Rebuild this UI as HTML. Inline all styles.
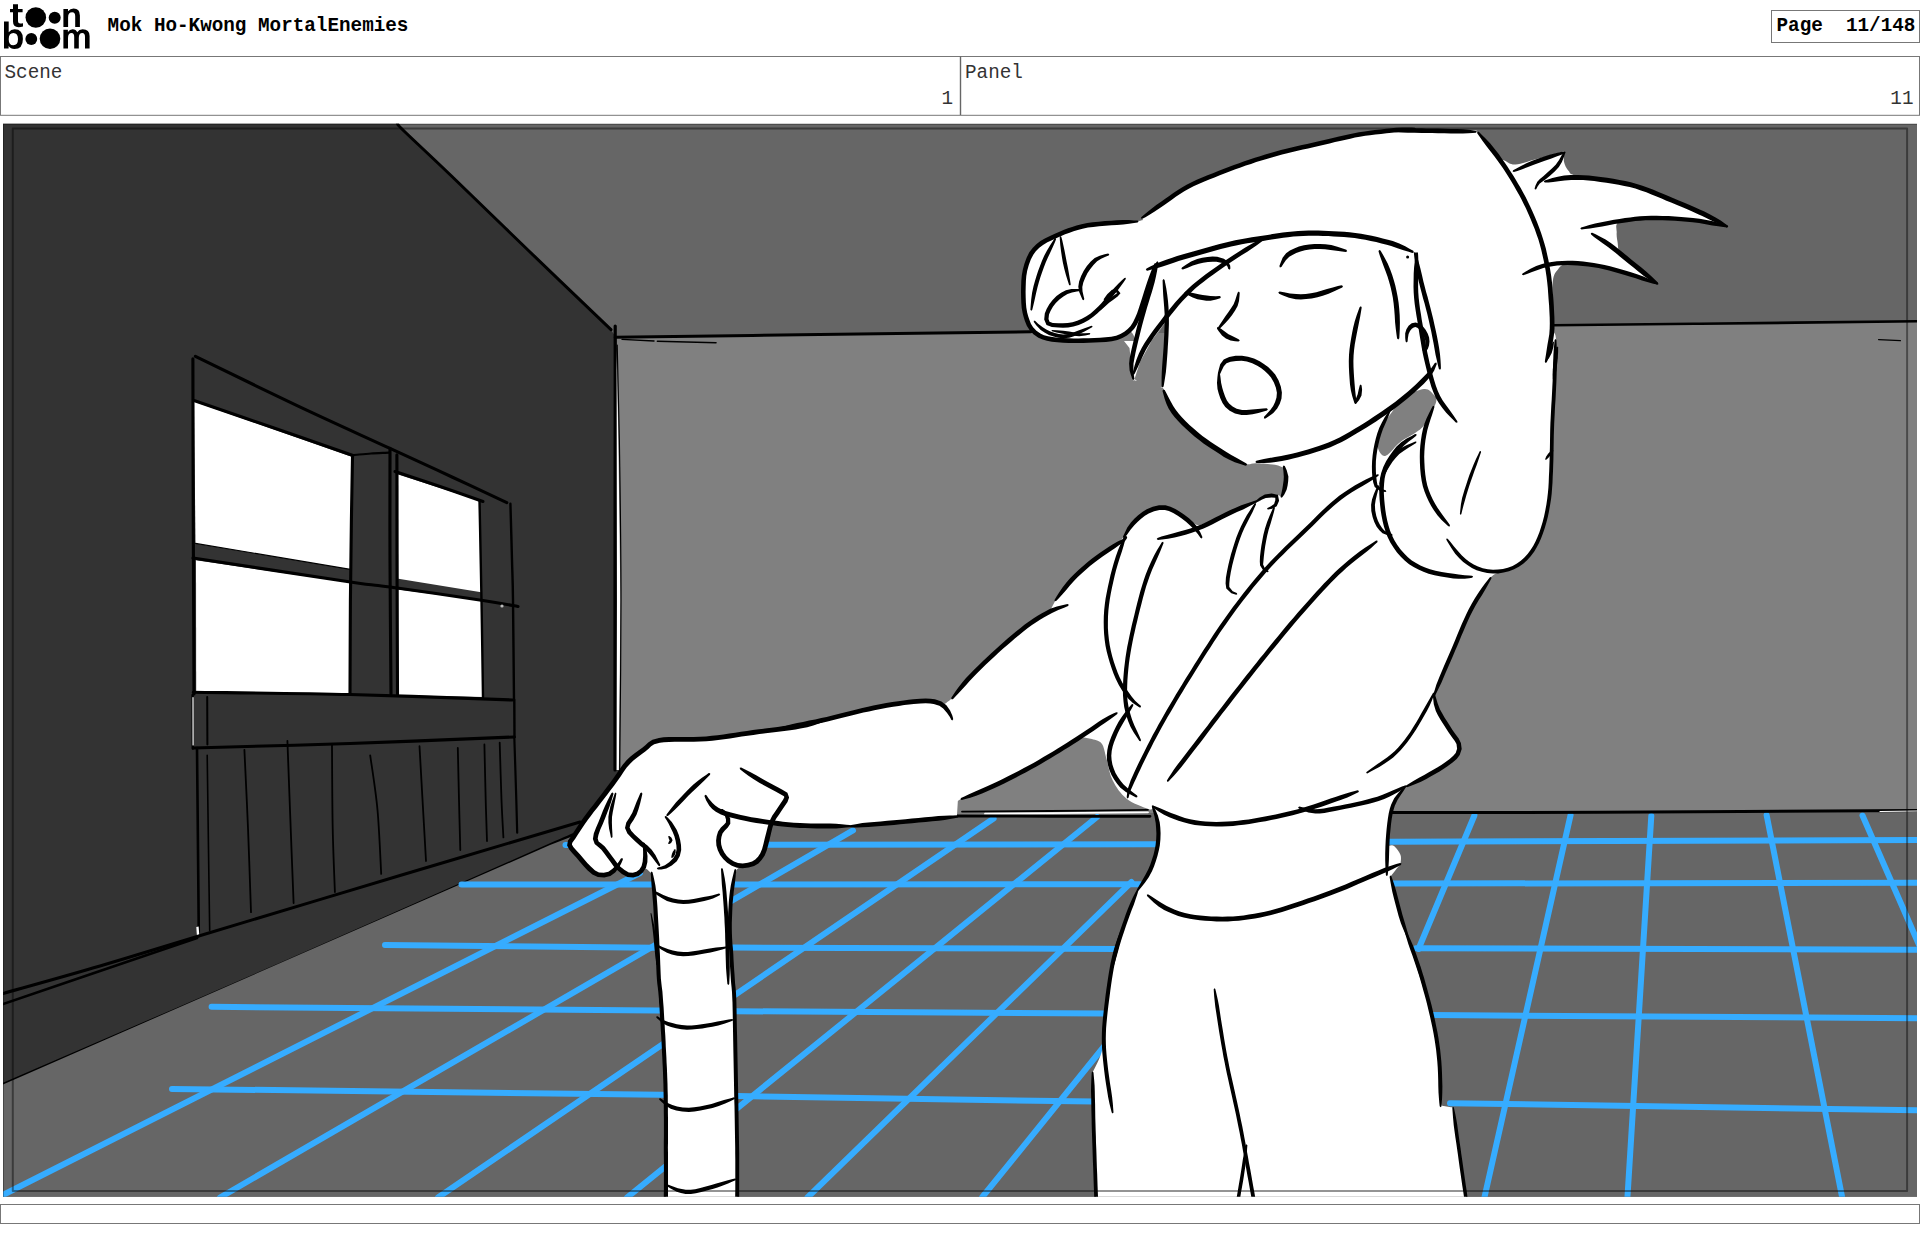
<!DOCTYPE html>
<html lang="en">
<head>
<meta charset="utf-8">
<title>Storyboard - Page 11/148</title>
<style>
html,body{margin:0;padding:0;background:#fff;}
body{width:1920px;height:1242px;overflow:hidden;position:relative;font-family:"Liberation Mono",monospace;}
svg{position:absolute;left:0;top:0;display:block;}
text{font-family:"Liberation Mono",monospace;font-size:19.3px;fill:#000;}
.b{font-weight:bold;}
.g{fill:#333;}
</style>
</head>
<body>
<svg width="1920" height="1242" viewBox="0 0 1920 1242">
<!-- header -->
<g id="logo" fill="#000">
  <!-- t -->
  <path d="M13 4.2H18V9H22.6V12.3H18V21.2Q18 23.6 20.2 23.6Q21.6 23.6 23 23.2V26.6Q21 27.3 18.6 27.3Q13 27.3 13 21.6V12.3H10V9H13Z"/>
  <circle cx="35.8" cy="17.5" r="10.3"/>
  <circle cx="54.7" cy="17.7" r="6"/>
  <!-- n -->
  <path d="M63.4 9H68V11.2Q70.2 8.4 73.6 8.4Q79.9 8.4 79.9 15.4V27H75.2V16.2Q75.2 12.3 72.2 12.3Q68.1 12.3 68.1 17.4V27H63.4Z"/>
  <!-- b -->
  <path d="M4 21.4H8.7V32.2Q10.9 29.3 14.6 29.3Q22.9 29.3 22.9 39Q22.9 49 14.4 49Q10.6 49 8.6 46.1V48.5H4ZM8.7 39.2Q8.7 45.3 13.3 45.3Q18 45.3 18 39.1Q18 33 13.4 33Q8.7 33 8.7 39.2Z" fill-rule="evenodd"/>
  <circle cx="31.3" cy="39" r="5.9"/>
  <circle cx="50" cy="38.8" r="10.3"/>
  <!-- m -->
  <path d="M63.4 29.8H67.9V32Q69.7 29.2 72.6 29.2Q76 29.2 77.2 32.2Q79.2 29.2 82.6 29.2Q89.6 29.2 89.6 36V48.6H85V37Q85 33.1 82.3 33.1Q78.8 33.1 78.8 38V48.6H74.2V37Q74.2 33.1 71.6 33.1Q68 33.1 68 38.2V48.6H63.4Z"/>
</g>
<text class="b" x="107.6" y="31">Mok Ho-Kwong MortalEnemies</text>
<rect x="1771.5" y="10.5" width="148" height="32" fill="#fff" stroke="#777" stroke-width="1"/>
<text class="b" x="1776.5" y="31" xml:space="preserve">Page  11/148</text>
<rect x="0.5" y="56.5" width="1919" height="58.8" fill="#fff" stroke="#777" stroke-width="1"/>
<path d="M960.5 56.5V115" stroke="#666" stroke-width="1.4" fill="none"/>
<text class="g" x="4.5" y="78">Scene</text>
<text class="g" x="953" y="103.5" text-anchor="end">1</text>
<text class="g" x="965" y="78">Panel</text>
<text class="g" x="1913.5" y="103.5" text-anchor="end">11</text>
<rect x="0.5" y="1204.5" width="1919" height="19" fill="#fff" stroke="#777" stroke-width="1"/>
<!-- drawing -->
<g stroke-linecap="round" stroke-linejoin="round">
<defs><clipPath id="cp"><rect x="3" y="123.8" width="1914" height="1072.9"/></clipPath></defs>
<g clip-path="url(#cp)">
<rect x="0" y="120" width="1920" height="1080" fill="#666666"/>
<path d="M614 337.5 L800 335 L1031 332 L1553 325.4 L1780 323 L1920 321.3 L1920 811 L1394 812.5 L1150 813 L616 822Z" fill="#808080"/>
<path d="M0 120 L397.5 120 L400 126 L452 176.5 L611 330 L616.5 338 L619.5 740 L619 826 L572 836.4 L550 845 L3 1084.5 L0 1086Z" fill="#333333"/>
<path d="M194 401.5 L353 457.2 L351 569.4 L195.5 543.5Z" fill="#ffffff"/>
<path d="M196 560.3 L350.5 582.5 L350.2 694 L196.2 692.6Z" fill="#ffffff"/>
<path d="M398.2 474.5 L479 500.6 L481.2 592.3 L398.4 578.8Z" fill="#ffffff"/>
<path d="M398.3 589.6 L481 600.3 L483.3 697 L398.3 695.2Z" fill="#ffffff"/>
<path d="M192.9 358.8C192.9 382.3 193 453.1 193.2 500C193.3 546.9 193.7 607.7 193.8 640C193.9 672.3 194 685 194 694" fill="none" stroke="#000" stroke-width="3.1"/>
<path d="M195.4 356.3C212 364.4 262.6 389.2 295 404.6C327.4 420 363.8 436.3 390 448.4C416.2 460.5 432.5 467.9 452 477C471.5 486.1 497.7 498.4 506.8 502.7" fill="none" stroke="#000" stroke-width="3.1"/>
<path d="M510.4 503.7C510.7 513.1 511.6 544 512 560C512.4 576 512.7 576.7 513 600C513.3 623.3 513.8 683.3 514 700" fill="none" stroke="#000" stroke-width="2.4"/>
<path d="M194 400.5C207.3 405.1 247.5 418.8 274 428C300.5 437.2 339.8 450.9 353 455.5" fill="none" stroke="#000" stroke-width="3.1"/>
<path d="M352.5 457C352.3 467.5 351.8 496.2 351.4 520C351 543.8 350.6 571 350.4 600C350.2 629 350.1 678.3 350 694" fill="none" stroke="#000" stroke-width="3.1"/>
<path d="M353 455C356 454.8 365 453.9 371 453.5C377 453.1 386 452.8 389 452.6" fill="none" stroke="#000" stroke-width="2.2"/>
<path d="M390 448.4C390 467 389.8 519.1 390 560C390.2 600.9 390.8 671.7 391 694" fill="none" stroke="#000" stroke-width="3.1"/>
<path d="M396.9 454.7C396.9 472.2 396.9 520 397 560C397.1 600 397.4 672.5 397.5 695" fill="none" stroke="#000" stroke-width="3.1"/>
<path d="M395 471.5C402.5 474 425.3 481.5 440 486.5C454.7 491.5 475.8 499 483 501.5" fill="none" stroke="#000" stroke-width="3.1"/>
<path d="M479.5 500.6C479.7 508.8 480.2 533.4 480.5 550C480.8 566.6 481.1 575.5 481.5 600C481.9 624.5 482.8 680.8 483 697" fill="none" stroke="#000" stroke-width="2.4"/>
<path d="M193 558C219.2 562 317.6 577.2 350.4 582C383.2 586.8 367.9 583.9 390 587C412.1 590.1 461.7 597.2 483 600.5C504.3 603.8 512.2 605.5 518 606.5" fill="none" stroke="#000" stroke-width="3.1"/>
<path d="M195.5 543.3 L350.4 569.4" fill="none" stroke="#000" stroke-width="1.2"/>
<path d="M193.3 692.2C219.4 692.6 296.8 693.2 350 694.5C403.2 695.8 485.4 699.1 512.5 700" fill="none" stroke="#000" stroke-width="3.1"/>
<circle cx="502" cy="606" r="1.6" fill="#bbb"/>
<path d="M192.6 695 L192.8 748.5" fill="none" stroke="#000" stroke-width="2.4"/>
<path d="M193 697.5 L193.1 745" fill="none" stroke="#fff" stroke-width="1.2"/>
<path d="M207.2 697 L207.4 744.4" fill="none" stroke="#000" stroke-width="2"/>
<path d="M193.3 748C219.4 747.2 296.5 745.3 350 743.5C403.5 741.7 486.9 738.1 514.3 737" fill="none" stroke="#000" stroke-width="3.1"/>
<path d="M514.3 700 L514.5 737" fill="none" stroke="#000" stroke-width="2.4"/>
<path d="M197 748C197.2 765 197.7 818.7 198 850C198.3 881.3 198.7 921.7 198.8 936" fill="none" stroke="#000" stroke-width="2.6"/>
<path d="M207.2 755.3C207.4 771.1 208.1 820.8 208.5 850C208.9 879.2 209.5 917 209.7 930.4" fill="none" stroke="#000" stroke-width="1.6"/>
<path d="M244.4 749.9C245 763 246.9 801.2 248 828.3C249.1 855.3 250.5 898.2 251 912.2" fill="none" stroke="#000" stroke-width="1.8"/>
<path d="M287.4 740.8C287.8 752.3 289 783 290 810C291 837 293 887.5 293.6 903" fill="none" stroke="#000" stroke-width="1.8"/>
<path d="M332 745C332.1 758.8 332.2 803.5 332.7 828C333.2 852.5 334.5 881.3 334.9 892" fill="none" stroke="#000" stroke-width="1.8"/>
<path d="M370.2 755.3C371.4 764.4 375.7 790.2 377.5 810C379.3 829.8 380.6 863.2 381.2 873.9" fill="none" stroke="#000" stroke-width="1.8"/>
<path d="M419.5 746.2C420.1 756.8 422 790.9 423.1 810C424.2 829.1 425.5 852.5 426 861" fill="none" stroke="#000" stroke-width="1.8"/>
<path d="M457.8 748C458 756.7 458.6 783 459 800C459.4 817 460.1 841.7 460.3 850" fill="none" stroke="#000" stroke-width="1.8"/>
<path d="M484.4 744.4C484.6 753.7 485.3 783.9 485.7 800C486.1 816.1 486.8 834.2 487 841" fill="none" stroke="#000" stroke-width="1.8"/>
<path d="M499.7 742.6C500 752.2 500.9 784.2 501.5 800C502.1 815.8 503.1 831.2 503.4 837.4" fill="none" stroke="#000" stroke-width="1.8"/>
<path d="M514.3 737C514.6 745.8 515.5 774 516 790C516.5 806 517 825.6 517.2 832.7" fill="none" stroke="#000" stroke-width="2.2"/>
<path d="M196.3 927 L198.6 926.5 L199.4 936 L197 937Z" fill="#fff"/>
<path d="M397.5 123.5C398.6 124.8 394.9 122.2 404 131C413.1 139.8 431 156.3 452 176.5C473 196.7 503.5 226.5 530 252C556.5 277.5 597.5 316.8 611 329.7" fill="none" stroke="#000" stroke-width="3"/>
<path d="M615.2 326C615.2 341.7 615.2 374.3 615.2 420C615.2 465.7 615 541.7 615 600C615 658.3 615 741.7 615 770" fill="none" stroke="#000" stroke-width="3.2"/>
<path d="M616.6 350 L617 600 L616.6 770 L618.9 770 L620.4 600 L618.2 430Z" fill="#fff"/>
<path d="M617.2 345C617.6 362.5 618.9 407.5 619.5 450C620.1 492.5 621 546.7 621 600C621 653.3 619.9 741.7 619.7 770" fill="none" stroke="#000" stroke-width="1.2"/>
<path d="M615.2 337.2C646 336.8 730.7 335.7 800 334.8C869.3 333.9 992.5 332.3 1031 331.8" fill="none" stroke="#000" stroke-width="3"/>
<path d="M622 339.4 L654 341" fill="none" stroke="#000" stroke-width="1.4"/>
<path d="M657.4 341.2 L716 342.7" fill="none" stroke="#000" stroke-width="1.6"/>
<path d="M1552.9 325.2C1577.4 324.9 1639.3 324.3 1700 323.7C1760.7 323.1 1880.8 321.7 1917 321.3" fill="none" stroke="#000" stroke-width="2.6"/>
<path d="M1878.6 339.6 L1900.4 340.6" fill="none" stroke="#000" stroke-width="1.3"/>
<path d="M3 993.5C19.2 988.9 67.4 975.6 100 966C132.6 956.4 148.8 951.1 198.8 936C248.8 920.9 336.5 894.5 400 875.5C463.5 856.5 550 830.9 580 822" fill="none" stroke="#000" stroke-width="3"/>
<path d="M3 1004C19.2 998.5 67.7 982 100 971C132.3 960 180.8 943.5 197 938" fill="none" stroke="#000" stroke-width="2.6"/>
<path d="M3 1084.5C49.2 1064.5 188.8 1004.4 280 964.5C371.2 924.6 501.3 866.4 550 845C598.7 823.6 568.3 837.8 572 836.4" fill="none" stroke="#000" stroke-width="3.2"/>
<path d="M619 826 L760 822 L955 817 L1150 816.5 L1394 813 L1920 811.5 L1920 1200 L0 1200 L0 1086 L3 1084.5 L550 845 L572 836.4Z" fill="#666666"/>
<path d="M565.5 845 L1156 844.3" fill="none" stroke="#36acff" stroke-width="6"/>
<path d="M461.5 884.6 L1140 884.3" fill="none" stroke="#36acff" stroke-width="6"/>
<path d="M385 945 L654 947.7 L733.6 947.6 L1116 948.9" fill="none" stroke="#36acff" stroke-width="6"/>
<path d="M211.6 1006.8 L657 1010.4 L735 1011.2 L1105 1013.5" fill="none" stroke="#36acff" stroke-width="6"/>
<path d="M172 1088.9 L661 1094.7 L737 1096 L1094 1101.6" fill="none" stroke="#36acff" stroke-width="6"/>
<path d="M-2 1197.5 L640 873" fill="none" stroke="#36acff" stroke-width="6"/>
<path d="M220 1197.5 L853 830.4" fill="none" stroke="#36acff" stroke-width="6"/>
<path d="M438 1197.5 L993.6 818.5" fill="none" stroke="#36acff" stroke-width="6"/>
<path d="M627 1197.5 L1097 817" fill="none" stroke="#36acff" stroke-width="6"/>
<path d="M807.5 1197.5 L1131.5 882" fill="none" stroke="#36acff" stroke-width="6"/>
<path d="M982 1197.5 L1106 1044" fill="none" stroke="#36acff" stroke-width="6"/>
<path d="M1390 841.7 L1920 840" fill="none" stroke="#36acff" stroke-width="6"/>
<path d="M1393 883.6 L1920 882.7" fill="none" stroke="#36acff" stroke-width="6"/>
<path d="M1416 948.2 L1920 949.8" fill="none" stroke="#36acff" stroke-width="6"/>
<path d="M1430 1015 L1920 1018.3" fill="none" stroke="#36acff" stroke-width="6"/>
<path d="M1450 1103.2 L1920 1110.3" fill="none" stroke="#36acff" stroke-width="6"/>
<path d="M1474.4 815.5 L1418.5 949" fill="none" stroke="#36acff" stroke-width="6"/>
<path d="M1570.6 815 L1484.3 1198" fill="none" stroke="#36acff" stroke-width="6"/>
<path d="M1651.3 816 L1627.4 1198" fill="none" stroke="#36acff" stroke-width="6"/>
<path d="M1766.6 815 L1842.3 1198" fill="none" stroke="#36acff" stroke-width="6"/>
<path d="M1862.5 815.5 L1920 947" fill="none" stroke="#36acff" stroke-width="6"/>
<path d="M1392 812.6C1426.7 812.5 1512.5 812.7 1600 812.3C1687.5 811.9 1864.2 810.7 1917 810.4" fill="none" stroke="#000" stroke-width="3"/>
<path d="M1880 811.5 L1917 811" fill="none" stroke="#fff" stroke-width="1.2"/>
<path d="M962 811.6C976.7 811.5 1019 811.3 1050 811C1081 810.7 1131.7 810 1148 809.8" fill="none" stroke="#000" stroke-width="1.8"/>
<path d="M985 813.7 L1148 812.3" fill="none" stroke="#fff" stroke-width="1.8"/>
<path d="M955 816C970.8 816 1017.5 816.2 1050 816.3C1082.5 816.3 1133.3 816.3 1150 816.3" fill="none" stroke="#000" stroke-width="2.8"/>
<path d="M1024 293C1024 288.1 1023.1 284.6 1024.3 278C1025.5 271.4 1026 260.6 1031.3 253.5C1036.6 246.4 1046.9 240.4 1056.3 235.7C1065.7 231 1074 227.7 1087.6 225.3C1101.1 222.9 1128.6 222.4 1137.6 221.2C1146.6 220 1141.1 218.5 1141.8 218C1149.5 212.8 1169.7 196.1 1187.7 186.7C1205.7 177.3 1229.2 168.6 1250 161.7C1270.8 154.8 1293.6 149.7 1312.8 145C1332 140.3 1351.1 136.1 1365 133.6C1378.9 131.1 1383.5 130.6 1396 130C1408.5 129.4 1426.7 129.8 1440 129.8C1453.3 129.8 1470 130.1 1476 130.2C1476.3 130.6 1474.5 128.3 1478 132.5C1481.5 136.7 1492.3 150.8 1496.8 155.5C1501.3 160.2 1501.9 159.2 1505 160.7C1508.1 162.2 1510 164.8 1515.6 164.4C1521.2 164.1 1530.3 160.8 1538.5 158.6C1546.7 156.4 1560.2 152.5 1564.6 151.3C1564.5 153 1563.3 158.4 1564 161.7C1564.7 165 1566.4 168.6 1568.7 171C1571 173.4 1567.7 173.7 1578 176C1588.3 178.3 1614.6 180.6 1630.3 184.7C1646 188.8 1659.8 195.5 1672 200.3C1684.2 205.2 1694 209.4 1703.3 213.8C1712.6 218.2 1723.5 224.5 1727.6 226.6C1721.8 225.6 1705.6 221.9 1692.8 220.5C1680 219.1 1663.2 217.8 1651 218C1638.8 218.2 1625.5 219.2 1619.8 221.6C1614.1 224 1617 229 1616.7 232.6C1616.4 236.2 1617.2 239.5 1617.7 243C1618.2 246.5 1617.7 250.4 1619.8 253.5C1621.9 256.6 1624 256.7 1630.3 261.8C1636.6 266.9 1653 280.3 1657.6 284C1653 282.4 1640.1 277.6 1630.3 274.7C1620.5 271.8 1609.4 268.3 1599 266.4C1588.6 264.5 1574.7 262.9 1567.7 263.5C1560.8 264.1 1559.8 267.4 1557.3 270.2C1554.8 272.9 1553.8 275 1553 280C1552.2 285 1552.5 291.9 1552.5 300C1552.5 308.1 1552.4 321.8 1553 328.5C1553.6 335.2 1555.8 331.1 1556 340C1556.2 348.9 1555 367.8 1554.4 381.7C1553.8 395.6 1552.8 409.5 1552.3 423.4C1551.8 437.3 1551.8 452.5 1551.3 465C1550.8 477.5 1550.6 488.1 1549.2 498.5C1547.8 508.9 1545.7 519 1542.9 527.7C1540.1 536.5 1536.7 544.6 1532.5 551C1528.3 557.4 1523.2 562.4 1517.5 566C1511.8 569.6 1502.5 570.7 1498.1 572.5C1493.7 574.3 1492.2 576.2 1491 577C1487.5 582.5 1476.4 597.8 1470 610C1463.6 622.2 1457.9 637.5 1452.5 650C1447.1 662.5 1440.6 677.8 1437.5 685C1434.4 692.2 1434.3 692.1 1433.7 693.5C1434.4 696.3 1435.1 704 1437.9 710.2C1440.7 716.5 1446.9 725.5 1450.4 731C1453.9 736.5 1457.7 739.7 1459 743.5C1460.3 747.3 1460.1 750.5 1458 754C1455.9 757.5 1451.7 760.9 1446.2 764.8C1440.8 768.7 1431.9 773.6 1425.3 777.2C1418.7 780.8 1409.7 785 1406.6 786.6C1404.3 789.7 1396.1 796.9 1393 805C1389.9 813.1 1388.9 828.3 1388 835C1387.1 841.7 1386.5 843.2 1387.5 845C1388.5 846.8 1391.8 844.3 1394 846C1396.2 847.7 1399.4 852 1400.5 855C1401.6 858 1400.5 862.5 1400.5 864C1398.8 866.1 1392.2 874.4 1390.5 876.5C1392.2 883 1396.8 902.2 1400.5 915.3C1404.2 928.4 1408.8 941.9 1413 955.3C1417.2 968.6 1422.2 984.4 1425.6 995.4C1428.9 1006.4 1430.8 1010.1 1433.1 1021.1C1435.4 1032.1 1438.2 1048 1439.4 1061.2C1440.7 1074.4 1440 1092.5 1440.6 1100C1441.2 1107.5 1442.6 1105 1443 1106C1444.7 1106.2 1451.4 1107.2 1453.1 1107.5C1453.9 1113.5 1455.9 1128.4 1458.1 1143.8C1460.3 1159.2 1465.1 1190.6 1466.5 1200C1404.8 1200 1158 1200 1096.3 1200C1095.9 1188.5 1094.4 1152.5 1093.8 1131.3C1093.2 1110 1092.8 1082.3 1092.6 1072.5C1094.3 1068.5 1100.4 1058.2 1102.6 1048.7C1104.8 1039.2 1104.3 1027.2 1105.6 1015.4C1106.8 1003.6 1108.1 989.6 1110.1 977.9C1112.1 966.2 1114.7 955.7 1117.6 945.3C1120.5 934.9 1124.3 924.5 1127.6 915.3C1130.9 906.1 1133.8 897.7 1137.6 890.2C1141.4 882.7 1146.8 877.7 1150.2 870.2C1153.6 862.7 1156.5 853.1 1157.7 845.2C1159 837.3 1158.5 828.8 1157.7 822.6C1156.9 816.4 1153.5 810.4 1152.7 808C1152 808.2 1152.8 810.5 1148.4 809C1144.1 807.5 1132.6 803.6 1126.6 798.8C1120.6 794 1115.9 786.8 1112.5 780C1109.1 773.2 1108.1 764.1 1106.3 758C1104.5 751.9 1104.2 746.7 1101.6 743.5C1099 740.3 1093.9 739.8 1090.6 738.8C1087.3 737.8 1083.4 737.7 1082 737.5C1080.3 738.3 1080.6 737.3 1072 742.3C1063.4 747.3 1044.2 759.6 1030.3 767.3C1016.4 774.9 1000 782.9 988.5 788.2C977 793.5 966.5 796.8 961.4 799C956.3 801.2 958.4 801.1 957.8 801.5C957.7 803.8 957.1 813.2 957 815.5C947.5 816.5 917.9 819.7 900 821.5C882.1 823.3 866.4 825.6 849.7 826.3C833 827 813.1 826 800 825.5C786.9 825 775.8 823.4 771 823C770.4 825.6 768.6 833.6 767.2 838.8C765.8 844 764.9 850.2 762.5 854.4C760.1 858.6 756.6 861.8 753 863.8C749.4 865.8 743.8 865.5 741 866.5C738.2 867.5 737.2 869.4 736.5 870C735.7 873.6 732.8 884.6 731.8 891.7C730.8 898.8 730.5 905.6 730.2 912.5C729.9 919.4 729.8 926.3 730 933.3C730.2 940.2 730.6 943.3 731.3 954.2C732 965.1 733.6 983.1 734.3 998.6C735 1014.1 734.9 1027.9 735.3 1047C735.7 1066.1 736.6 1087.5 736.9 1113C737.2 1138.5 737.2 1185.5 737.2 1200C725.3 1200 677.8 1200 665.9 1200C665.9 1183.3 666.1 1125.5 665.7 1100C665.4 1074.5 664.6 1063.9 663.8 1047C663 1030.1 661.9 1014.1 660.9 998.6C659.9 983.1 658.6 966.8 657.8 954.2C657 941.6 656.9 933.3 656.3 922.9C655.7 912.5 655 899.9 654.2 891.7C653.4 883.6 652 877 651.6 874C650.5 873.1 647.4 868.4 645 868.5C642.6 868.6 640.3 873.4 637.5 874.5C634.7 875.6 631.1 876 628 875.2C624.9 874.4 621.9 869.6 618.8 869.5C615.7 869.4 612.8 873.5 609.4 874.5C606 875.5 601.8 876.1 598.4 875.2C595 874.3 592.4 872 589 868.9C585.6 865.8 581.3 860.4 578 856.5C574.7 852.6 570.5 847.3 569 845.5C569.7 844.1 570.6 841.7 573.4 837.2C576.2 832.7 581.3 824.9 586 818.4C590.7 811.9 596.7 804.5 601.6 798C606.5 791.5 611.2 785.4 615.6 779.4C620 773.4 623.3 767.2 628 762.2C632.7 757.2 638.6 753.4 643.8 749.7C649 746.1 649 742.1 659.4 740.3C669.8 738.5 690.7 740.1 706.3 738.8C721.9 737.5 740.7 734.2 753 732.5C765.3 730.8 768.5 730.7 780 728.7C791.5 726.7 806.1 723.9 821.7 720.4C837.3 716.9 858.5 711 873.8 707.9C889.1 704.8 903.4 702.6 913.5 701.6C923.6 700.6 929.1 701.2 934.3 701.6C939.5 702 943 703.6 944.8 704C946 703.1 950.8 699.4 952 698.5C954.6 695.4 961.6 686.3 967.7 679.7C973.8 673.1 981.5 665.5 988.5 658.9C995.5 652.3 1002.4 645.9 1009.4 640C1016.4 634.1 1023.5 628.2 1030.3 623.4C1037.1 618.6 1046.7 613.2 1050 611.2C1050.9 609.4 1054.4 602.3 1055.3 600.5C1058.1 597 1065.8 586.2 1072 579.6C1078.2 573 1085.8 566.5 1092.8 560.9C1099.8 555.3 1108.5 550.3 1113.7 546.3C1118.9 542.3 1120.7 540.8 1123.8 537C1126.9 533.2 1128.5 528.1 1132.5 523.8C1136.5 519.5 1142.1 514 1147.5 511.3C1152.9 508.6 1159.6 507.1 1165 507.5C1170.4 507.9 1175 511 1180 513.8C1185 516.5 1192.5 522.3 1195 524C1196.2 524 1196 526.2 1202.5 524.2C1209 522.2 1224.4 515.5 1233.8 511.7C1243.2 507.9 1253.6 504.2 1258.8 501.6C1264 499 1262.4 497.2 1265 496C1267.6 494.8 1271.7 494.5 1274.4 494.5C1277.1 494.5 1279.9 495.8 1281 496C1281.6 494.8 1283.7 492.2 1284.5 489C1285.3 485.8 1286.1 480.1 1286 476.6C1285.9 473.1 1284.2 469.4 1283.8 468C1282.3 467.5 1279.7 465.6 1275 464.8C1270.3 464 1260.4 463.3 1255.6 463.2C1250.8 463.1 1250.5 464.9 1246.3 464C1242.1 463.1 1235.1 460.2 1230.2 457.8C1225.3 455.4 1221 452.2 1216.8 449.5C1212.6 446.8 1209.3 444.8 1205.1 441.7C1200.9 438.6 1196 434.7 1191.8 431C1187.6 427.3 1183.5 424.2 1180 419.6C1176.5 415 1173.8 408.5 1171 403.2C1168.2 397.9 1164.3 390.5 1163 388C1158.1 386.7 1138.3 381.3 1133.4 380C1133.1 377.2 1130.9 370.2 1131.3 363.5C1131.7 356.8 1135.2 343.9 1136 340C1134.9 338.5 1132.5 331.3 1129.3 331C1126.1 330.7 1124.4 336.6 1116.8 338.3C1109.2 340 1095.2 341 1083.4 341C1071.6 341 1054.6 340.3 1045.9 338.3C1037.2 336.3 1035 334.1 1031.3 329C1027.6 323.9 1025.2 313.7 1024 307.7C1022.8 301.7 1024 297.9 1024 293Z" fill="#ffffff"/>
<path d="M1124 341 L1129.5 348 L1131 362 L1131.5 376 L1134 381 L1137 341Z" fill="#ffffff"/>
<path d="M1167 320 L1152 340 L1140 362 L1134.5 379 L1150 392 L1162.6 387 L1165.7 346.8Z" fill="#808080"/>
<path d="M1167 320 L1158.5 333 L1166.3 333Z" fill="#666666"/>
<path d="M1404.3 397.4C1410 393 1419.2 389.5 1424.1 389C1429 388.5 1431.5 392.3 1433.5 394.6C1435.5 396.9 1437.4 397.8 1436 402.6C1434.6 407.4 1428.3 418.5 1425.1 423.4C1421.9 428.3 1421 428.7 1416.8 431.8C1412.6 434.9 1405 438.4 1400.1 442.2C1395.2 446 1390.7 452.7 1387.6 454.7C1384.5 456.7 1383 456 1381.3 454.3C1379.6 452.6 1377.4 448.8 1377.6 444.3C1377.8 439.9 1380.4 432.5 1382.4 427.6C1384.4 422.7 1386.1 420.1 1389.7 415.1C1393.3 410.1 1398.6 401.8 1404.3 397.4Z" fill="#808080"/>
<path d="M1138.6 221.6L1137.6 220.6L1134 220.4L1128.9 220.1L1123 220L1116.6 220.3L1111.2 220.7L1105 221.1L1098.7 221.7L1092.6 222.3L1087.2 223L1081.5 224.2L1076.5 225.5L1072.1 227L1068 228.3L1063.4 230L1059.5 231.7L1055.4 233.6L1050.5 235.8L1045.3 238.2L1040.4 241.1L1036.3 244.3L1032.6 247.9L1029.3 252.3L1026.6 257.7L1024.4 263.7L1022.8 269.7L1021.8 275.3L1021.3 280.8L1021.1 286.7L1021 291.9L1021.1 297.6L1021.3 303.1L1021.7 308L1022.6 313.1L1023.7 317.3L1024.9 321L1026.8 325.8L1029.5 330L1033.4 334.2L1038.4 337.8L1042.6 339.5L1046.9 340.8L1051.8 341.7L1057.2 342.3L1063.1 342.7L1068.7 342.9L1073.7 343L1078.5 343L1083.4 342.9L1088.9 342.8L1094.6 342.6L1100.2 342.3L1106 341.9L1111.9 341.3L1117.5 340.1L1122.4 338.1L1126.9 335.5L1130.9 332.3L1134.2 328.7L1137 324.5L1139.7 319.1L1141.4 314.8L1143.1 309.9L1144.8 304.7L1146.4 299.3L1148.2 293.8L1149.8 288.8L1151.6 283.3L1153.3 277.6L1154.6 272.2L1155.7 267.5L1156.4 264.2L1155.7 262.9L1154.4 263.6L1153.1 266.7L1151.2 271.1L1149.2 276.3L1147.2 281.9L1145.4 287.4L1143.8 292.4L1142.1 297.9L1140.4 303.3L1138.7 308.5L1137.1 313.2L1135.5 317.1L1133 322.2L1130.6 325.9L1127.7 328.9L1124.3 331.7L1120.4 334L1116.1 335.7L1111.2 336.8L1105.6 337.3L1100 337.7L1094.4 338L1088.8 338.2L1083.4 338.3L1078.4 338.4L1073.8 338.4L1068.9 338.3L1063.4 338.1L1057.6 337.7L1052.4 337.1L1048 336.3L1044 335.2L1040.8 333.8L1036.4 330.8L1033.1 327.2L1030.9 323.7L1029.3 319.4L1028.1 316L1027.1 312.2L1026.3 307.4L1025.9 302.8L1025.7 297.4L1025.6 291.9L1025.7 286.9L1025.9 281.1L1026.3 275.9L1027.2 270.7L1028.8 265.1L1030.8 259.5L1033.3 254.7L1036 250.9L1039.3 247.8L1043 244.9L1047.4 242.3L1052.4 240L1057.2 237.8L1061.3 235.9L1065.1 234.3L1069.6 232.7L1073.5 231.3L1077.8 229.9L1082.5 228.7L1088 227.6L1093.2 226.9L1099.1 226.2L1105.4 225.7L1111.5 225.3L1117 224.9L1123.2 224.4L1129.1 223.8L1134.1 223.1L1137.6 222.6Z" fill="#000"/>
<path d="M1141 218.6L1142.4 218.8L1145.4 217.2L1149.5 214.8L1154.3 211.8L1159.2 208.6L1164 205.3L1167.9 202.6L1171.8 199.7L1175.8 196.8L1180 194L1184.3 191.3L1188.8 188.7L1193.5 186.3L1198.6 184L1203.8 181.7L1209.2 179.5L1214.5 177.4L1219.8 175.3L1225 173.3L1230.2 171.3L1235.4 169.3L1240.6 167.4L1245.8 165.6L1251 163.9L1256.2 162.1L1261.4 160.5L1266.6 158.9L1271.7 157.4L1276.9 155.9L1282.1 154.5L1287.3 153.2L1292.4 151.9L1297.6 150.7L1302.9 149.6L1308.1 148.4L1313.3 147.2L1318.7 146L1324.1 144.7L1329.6 143.4L1335 142.1L1340 140.9L1344.6 139.9L1350.3 138.7L1355 137.6L1359.7 136.8L1365.3 135.8L1370 135.2L1375.4 134.5L1381 133.9L1386.6 133.3L1391.8 132.7L1396.4 132.3L1402.4 131.6L1407.6 130.9L1412 130.3L1415.1 129.8L1416 128.7L1414.9 127.8L1411.8 127.6L1407.5 127.5L1402.1 127.4L1396 127.7L1391.4 128.2L1386.1 128.7L1380.5 129.4L1374.8 130L1369.5 130.7L1364.7 131.4L1358.9 132.3L1354.1 133.2L1349.3 134.2L1343.6 135.5L1339 136.5L1333.9 137.7L1328.6 138.9L1323.1 140.2L1317.6 141.5L1312.3 142.8L1307.1 144L1301.9 145.1L1296.6 146.3L1291.4 147.5L1286.2 148.8L1280.9 150.1L1275.7 151.5L1270.5 153L1265.2 154.6L1260 156.2L1254.8 157.8L1249.6 159.5L1244.3 161.3L1239.1 163.2L1233.9 165.1L1228.6 167L1223.4 169L1218.2 171.1L1212.9 173.2L1207.5 175.3L1202.1 177.5L1196.7 179.8L1191.6 182.2L1186.6 184.7L1181.9 187.4L1177.5 190.2L1173.3 193.1L1169.2 196L1165.2 198.8L1161.4 201.5L1156.6 204.8L1151.8 208.4L1147.4 211.9L1143.8 214.9L1141.2 217.2Z" fill="#000"/>
<path d="M1060.4 236L1059.7 236.9L1059.9 240.4L1060.3 245.3L1061 251L1061.9 256.9L1062.8 262.2L1064.2 268.6L1066 275.2L1067.8 281L1069.1 285L1070.1 285.6L1070.7 284.6L1070.1 280.4L1069.1 274.5L1067.9 267.8L1066.6 261.4L1065.6 256.2L1064.5 250.5L1063.3 244.9L1062.2 240.1L1061.3 236.7Z" fill="#000"/>
<path d="M1055.7 238.1L1054.5 238.5L1052.6 241.4L1050 245.6L1047 250.5L1044.2 255.8L1041.9 261L1040 266L1038.1 271.1L1036.4 276.2L1034.9 281.3L1033.5 286.3L1032.1 292.8L1031.2 299.6L1030.7 305.5L1030.4 309.7L1031.2 310.7L1032.2 309.9L1033.2 305.9L1034.6 300.1L1036 293.6L1037.5 287.3L1038.8 282.5L1040.3 277.5L1042 272.4L1043.8 267.4L1045.7 262.6L1047.9 257.6L1050.4 252.3L1052.8 247.1L1054.8 242.6L1056.1 239.3Z" fill="#000"/>
<path d="M1109.3 254.2L1108.1 253.6L1104.7 254.3L1099.7 255.7L1094.7 258.1L1090.5 261.8L1086.7 266.3L1083.6 271.1L1081.1 276.1L1079.1 281.4L1078.3 286.7L1079.2 292L1081.1 296.6L1082.5 299.7L1083.7 300.3L1084.3 299.1L1083.5 295.8L1082.5 291.3L1082.3 286.9L1083.3 282.6L1085.1 277.9L1087.4 273.3L1090.3 268.9L1093.7 264.7L1097.1 261.3L1101.1 258.8L1105.5 256.8L1108.7 255.4Z" fill="#000"/>
<path d="M1081.3 289.9L1080.2 289L1076.6 289L1071.3 289.1L1065.9 290.2L1061.1 292.7L1056.5 296.1L1052.6 299.9L1049.3 304.3L1046.6 309L1044.8 313.5L1044.2 319.6L1046.5 324.9L1051.9 327.1L1058.3 327.6L1063 327.7L1068.2 327.4L1073.5 326.5L1078.7 324.9L1083.9 322.7L1088.8 320L1093.3 316.8L1097.5 313.2L1101.7 309.2L1104.9 305.8L1108 302.1L1111.2 298.2L1114.3 294.5L1117.6 290.4L1120.9 286L1123.8 282L1125.8 279.1L1125.7 277.8L1124.4 277.9L1121.9 280.3L1118.3 283.8L1114.5 287.8L1110.9 291.7L1107.8 295.5L1104.7 299.3L1101.6 302.9L1098.5 306.2L1094.5 310L1090.6 313.4L1086.4 316.2L1081.9 318.7L1077.2 320.8L1072.5 322.3L1067.7 323.1L1062.9 323.3L1058.5 323.2L1052.8 322.9L1049.5 321.7L1048.5 319L1049 314.5L1050.5 310.9L1052.9 306.7L1055.8 302.9L1059.4 299.5L1063.4 296.4L1067.5 294L1072 292.5L1076.9 291.6L1080.4 291Z" fill="#000"/>
<path d="M1103.8 299.9L1104.8 299.9L1108.9 295.9L1113.2 292.3L1116.4 292.5L1117.3 293L1115.6 294.2L1111.4 297.1L1107.4 300.3L1102.8 305.3L1099.6 309.3L1099.6 310.3L1100.6 310.3L1104.4 306.9L1109.4 302.5L1113.3 299.7L1117.6 296.6L1120.5 293.2L1117.4 289.5L1112 289.7L1107.2 294.3L1103.8 298.9Z" fill="#000"/>
<path d="M1033.8 320.7L1033.8 321.9L1036.4 325.4L1040.7 329.9L1044.5 332.5L1048.9 334.9L1053.6 336.6L1058.3 337.8L1063.3 338.3L1069.2 337.7L1073.9 336.2L1079.2 334L1084.5 331.4L1089 329L1092.1 327.3L1092.6 326.2L1091.5 325.7L1088.1 326.9L1083.2 328.7L1077.8 330.7L1072.6 332.7L1068.4 333.9L1063.2 334.5L1058.9 334L1054.8 333L1050.4 331.4L1046.3 329.4L1042.7 327.3L1038.1 323.7L1035 320.7Z" fill="#000"/>
<path d="M1051.4 330.5L1052 331.3L1056.5 332.4L1062.9 333.7L1068.5 334.7L1074.1 335.7L1079.2 336.3L1085.2 335.5L1089.8 334.5L1090.4 333.7L1089.6 333.1L1085 333.3L1079.2 333.3L1074.6 332.6L1069.1 331.5L1063.3 330.7L1056.8 330.2L1052.2 329.9Z" fill="#000"/>
<path d="M1387.3 130.4L1388.3 131.4L1391.7 131.8L1396.2 132.2L1401.6 132.6L1407.8 132.8L1414.5 132.8L1421.7 132.9L1426.5 133L1432 133.1L1438.1 133.2L1444.4 133.3L1450.8 133.5L1457.1 133.6L1462.9 133.5L1468.2 133.3L1472.6 133L1475.9 132.7L1476.9 131.7L1475.9 130.7L1472.6 130.3L1468.2 129.8L1463 129.3L1457.2 129L1450.9 128.9L1444.5 128.7L1438.2 128.6L1432.1 128.5L1426.6 128.4L1421.7 128.3L1414.6 128.2L1407.8 128.2L1401.6 128.3L1396.2 128.6L1391.7 129L1388.3 129.4Z" fill="#000"/>
<path d="M1477.3 131.7L1477.2 133.2L1479.5 136.5L1482.8 141.2L1486.7 146.5L1491 151.9L1494.9 156.9L1497.8 160.9L1500.7 164.9L1503.5 169.1L1506.2 173.2L1508.9 177.4L1511.5 181.7L1514 186L1516.5 190.4L1519 194.8L1521.4 199.3L1523.7 203.9L1526 208.6L1528.2 213.5L1530.4 218.6L1532.6 223.9L1534.7 229.1L1536.6 234.4L1538.4 239.6L1539.9 244.8L1541.3 250L1542.5 255.2L1543.7 260.4L1544.7 265.5L1545.6 270.6L1546.5 276.5L1547.2 282.3L1547.8 288L1548.2 293.8L1548.6 299.6L1549.1 305.5L1549.4 311.6L1549.7 317.6L1549.8 323.3L1549.7 328.5L1549.3 334.3L1548.4 339.6L1547.5 344.5L1546.8 349L1546 354.2L1545.3 358.6L1544.8 361.6L1545.5 362.9L1546.8 362.2L1547.9 359.3L1549.5 355.1L1551 349.8L1552.1 345.4L1553.1 340.4L1553.9 334.9L1554.5 328.7L1554.5 323.3L1554.4 317.4L1554.1 311.4L1553.8 305.2L1553.4 299.2L1552.9 293.4L1552.5 287.6L1551.9 281.8L1551.2 275.9L1550.2 269.8L1549.3 264.7L1548.3 259.4L1547.1 254.2L1545.9 248.8L1544.4 243.5L1542.8 238.2L1541.1 232.9L1539.1 227.5L1537 222.1L1534.8 216.8L1532.5 211.6L1530.2 206.6L1527.9 201.8L1525.6 197.1L1523.1 192.5L1520.7 188.1L1518.1 183.7L1515.5 179.3L1512.9 174.9L1510.1 170.7L1507.4 166.4L1504.5 162.3L1501.6 158.2L1498.7 154.1L1494.7 148.9L1490.3 143.6L1485.8 138.7L1481.7 134.7L1478.8 131.8Z" fill="#000"/>
<path d="M1555.5 339.1L1554.6 340L1554.3 343.7L1553.8 348.8L1553.4 354.9L1553.2 361.6L1553 368.5L1552.8 375.3L1552.6 381.6L1552.3 387.6L1552 393.5L1551.7 399.5L1551.3 405.4L1551 411.4L1550.7 417.4L1550.4 423.3L1550.2 429.4L1550.1 435.5L1550 441.6L1549.9 447.7L1549.7 453.7L1549.6 459.4L1549.4 464.9L1549.2 471L1548.9 476.8L1548.7 482.4L1548.4 487.8L1547.9 493.1L1547.3 498.2L1546.4 504.4L1545.3 510.4L1544.1 516.3L1542.7 521.8L1541.1 527.1L1539.4 532.2L1537.5 537L1535.5 541.5L1533.3 545.7L1530.9 549.5L1527.8 553.8L1524.4 557.6L1520.8 560.8L1516.9 563.6L1512.6 565.9L1507.8 567.7L1502.9 568.9L1498 569.6L1493 569.7L1487.8 569.2L1482.7 568.2L1478 566.6L1473.7 564.6L1469.6 562L1465.7 559L1461.9 555.6L1458.1 551.3L1454 546.4L1450.3 541.8L1447.7 538.7L1446.5 538.5L1446.3 539.7L1448.4 543.2L1451.5 548.3L1455.2 553.7L1459.3 558.2L1463.2 561.9L1467.4 565.1L1471.9 567.9L1476.6 570.2L1481.8 571.8L1487.2 572.9L1492.8 573.5L1498.2 573.4L1503.6 572.6L1509 571.3L1514.1 569.3L1518.9 566.8L1523.2 563.8L1527.1 560.3L1530.7 556.2L1534.1 551.7L1536.6 547.6L1538.9 543.2L1541 538.4L1542.9 533.5L1544.7 528.3L1546.3 522.8L1547.8 517.1L1549 511.2L1550.1 505L1551.1 498.8L1551.7 493.4L1552.1 488.1L1552.5 482.6L1552.7 477L1553 471.2L1553.2 465.1L1553.4 459.5L1553.5 453.7L1553.6 447.8L1553.7 441.7L1553.8 435.6L1554 429.5L1554.2 423.5L1554.5 417.5L1554.8 411.6L1555.1 405.6L1555.5 399.7L1555.8 393.7L1556.1 387.7L1556.4 381.8L1556.6 375.4L1556.8 368.6L1557 361.7L1557 355L1556.8 348.9L1556.6 343.8L1556.4 340Z" fill="#000"/>
<path d="M1557.4 346.5L1556.5 347.2L1555.4 351.5L1554.1 357.7L1553.3 363.8L1552.8 369.5L1552.7 375L1552.9 378.9L1553.6 379.8L1554.5 379.1L1555.4 375.3L1556.4 369.9L1557.1 364.2L1557.8 358.2L1558.1 351.9L1558.1 347.4Z" fill="#000"/>
<path d="M1553.6 341.5L1552.8 341.9L1550.9 346.4L1548.9 352L1546.9 356.8L1545.5 360.6L1545.8 361.5L1546.7 361.2L1549.1 357.9L1551.7 353L1553.4 347.1L1554 342.3Z" fill="#000"/>
<path d="M1553.2 450L1552.3 450.1L1550.3 451.5L1548.1 453.8L1546.2 456.5L1545.2 458.9L1545.3 459.8L1546.2 459.7L1548.2 458L1550.3 455.6L1552.2 453.1L1553.3 450.9Z" fill="#000"/>
<path d="M1512.6 171.5L1513.9 172L1517.4 170.9L1522.3 169.2L1528 167.1L1533.8 164.8L1539.3 162.7L1544.8 160.8L1550.8 158.8L1556.5 156.6L1561.4 154.7L1564.9 153.2L1565.5 152L1564.3 151.4L1560.6 152.1L1555.5 153.3L1549.5 154.8L1543.4 156.7L1537.7 158.7L1532.2 160.8L1526.4 163.3L1521 166L1516.4 168.4L1513.1 170.2Z" fill="#000"/>
<path d="M1565 151.5L1563.8 151.9L1561.7 155.3L1558.9 160.2L1555.7 164.7L1551.9 168.6L1547.4 172.6L1543.6 175.9L1539.9 179L1537.3 181.7L1535.5 185.5L1534.6 188.4L1535 189.6L1536.2 189.2L1537.6 186.6L1539.7 183.5L1542.2 181.7L1546 178.9L1550 175.7L1554.7 171.6L1558.9 167.1L1561.9 161.9L1564.1 156.5L1565.4 152.7Z" fill="#000"/>
<path d="M1543.7 181.7L1545 182.6L1548.5 182.4L1553.1 181.9L1558.6 181.3L1564.7 180.5L1571.2 179.9L1578.1 179.9L1583 180.1L1588.4 180.6L1594.2 181.1L1600.3 181.9L1606.4 182.7L1612.6 183.7L1618.6 184.7L1624.3 185.9L1629.7 187.1L1635.4 188.6L1640.9 190.4L1646.3 192.3L1651.5 194.4L1656.6 196.5L1661.6 198.6L1666.4 200.7L1671.1 202.6L1677 205L1682.5 207.3L1687.8 209.5L1692.8 211.7L1697.6 213.9L1702.2 216L1707.8 218.8L1713.4 221.6L1718.8 224L1723.4 226L1726.7 227.4L1728.2 226.9L1727.7 225.4L1724.8 223.4L1720.7 220.6L1715.6 217.4L1710.1 214.4L1704.4 211.6L1699.7 209.4L1694.8 207.2L1689.7 205L1684.4 202.7L1678.8 200.4L1672.9 198L1668.3 196.1L1663.5 194.1L1658.5 192L1653.4 189.8L1648 187.7L1642.5 185.7L1636.8 183.9L1630.9 182.3L1625.4 181L1619.5 179.9L1613.4 178.8L1607.1 177.8L1600.9 177L1594.8 176.2L1588.9 175.6L1583.3 175.2L1578.1 174.9L1570.9 175L1564.1 175.6L1557.8 176.7L1552.4 178.1L1547.9 179.5L1544.6 180.4Z" fill="#000"/>
<path d="M1728.2 226.6L1727.4 225.4L1723.8 224.4L1718.9 222.9L1713 221.3L1706.5 220L1699.7 218.8L1693.1 217.9L1687.3 217.4L1681.3 216.9L1675 216.5L1668.7 216.1L1662.5 215.9L1656.6 215.8L1651.1 215.8L1645.3 216L1640 216.3L1635 216.8L1630.1 217.4L1625 218.1L1619.5 218.9L1614 219.8L1607.8 220.9L1601.4 222.2L1595.1 223.5L1589.4 225L1584.6 226.4L1581.1 227.4L1580.3 228.6L1581.5 229.4L1585.1 229L1590 228.4L1595.9 227.6L1602.2 226.5L1608.6 225.2L1614.7 224.1L1620.1 223.3L1625.6 222.4L1630.7 221.7L1635.5 221.1L1640.3 220.7L1645.5 220.3L1651.1 220.2L1656.6 220.2L1662.4 220.3L1668.5 220.5L1674.8 220.8L1681 221.2L1686.9 221.7L1692.5 222.3L1699 223.1L1705.7 224.3L1712.2 225.4L1718.2 226.3L1723.3 227L1727 227.4Z" fill="#000"/>
<path d="M1590.8 233.1L1591.1 234.6L1594 236.9L1598.2 240L1603 243.6L1608 247.1L1611.8 250L1615.7 253.1L1619.8 256.4L1624.1 260L1628.7 263.7L1633.2 267.3L1638.3 271.4L1643.6 275.7L1648.9 279.4L1653.4 282.4L1656.7 284.6L1658.3 284.4L1658.1 282.8L1655.3 280.1L1651.4 276.3L1646.7 271.9L1641.4 267.6L1636.3 263.5L1631.9 259.9L1627.2 256.1L1622.9 252.6L1618.8 249.2L1614.8 246.1L1610.8 243.1L1605.6 239.6L1600.3 236.7L1595.6 234.3L1592.3 232.8Z" fill="#000"/>
<path d="M1658.3 284L1657.7 282.8L1654.2 281.1L1649.3 278.9L1643.4 276.4L1637.1 274.2L1631 272.2L1626 270.7L1620.8 269.2L1615.5 267.7L1610.1 266.2L1604.7 264.9L1599.4 263.9L1594 263L1588.6 262.2L1583.2 261.6L1577.8 261.1L1572.6 260.8L1567.7 260.7L1562.1 260.9L1556.8 261.3L1551.7 261.9L1546.8 262.8L1542.1 263.9L1536.2 265.9L1530.5 268.7L1525.8 271.5L1522.5 273.4L1522 274.7L1523.3 275.2L1526.9 273.9L1532 272L1537.7 269.9L1543.3 268.1L1547.7 267.1L1552.4 266.2L1557.2 265.6L1562.3 265.2L1567.7 265.1L1572.5 265.2L1577.5 265.5L1582.7 265.9L1588.1 266.5L1593.4 267.3L1598.6 268.1L1603.8 269.2L1609.1 270.5L1614.3 271.9L1619.6 273.4L1624.7 274.9L1629.6 276.4L1635.7 278.3L1642 280.4L1648.1 282.2L1653.3 283.7L1657.1 284.6Z" fill="#000"/>
<path d="M1145.8 270L1147.3 270.7L1150.9 269.8L1155.9 268.5L1161.8 266.8L1167.9 264.7L1173.8 262.7L1178.7 261.1L1183.8 259.5L1189.1 258L1194.4 256.4L1199.7 254.9L1205 253.4L1210.3 252L1215.6 250.5L1220.9 249.1L1226.1 247.8L1231.2 246.6L1236.1 245.5L1241.8 244.3L1247.3 243.3L1252.6 242.5L1257.9 241.7L1263.1 240.9L1268.3 240L1273.4 239.2L1278.5 238.5L1283.3 237.8L1288 237.2L1293.4 236.6L1298.3 236.2L1303.3 235.9L1308.7 235.7L1313.3 235.7L1318.1 235.7L1323.2 235.9L1328.3 236.1L1333.5 236.4L1338.7 236.7L1343.9 237L1349.2 237.5L1354.6 238.1L1360.3 238.9L1365.3 239.8L1370.7 240.9L1376.1 242.1L1381.5 243.4L1386.7 244.8L1391.2 246.1L1397.5 248.2L1403.5 250.2L1408.7 251.8L1412.3 253L1413.9 252.4L1413.3 250.8L1409.9 248.9L1405.2 246.3L1399.3 243.4L1392.8 241.1L1388 239.8L1382.8 238.4L1377.3 237L1371.8 235.8L1366.3 234.7L1361.1 233.7L1355.3 232.9L1349.7 232.3L1344.3 231.8L1339 231.5L1333.7 231.2L1328.5 230.9L1323.3 230.7L1318.3 230.5L1313.3 230.5L1308.5 230.5L1303.1 230.7L1298 231L1292.9 231.4L1287.4 232L1282.7 232.6L1277.7 233.3L1272.6 234.1L1267.5 234.9L1262.3 235.7L1257.1 236.5L1251.8 237.3L1246.4 238.2L1240.8 239.2L1235.1 240.3L1230 241.5L1224.8 242.7L1219.6 244.1L1214.2 245.5L1208.9 246.9L1203.6 248.4L1198.3 249.9L1193 251.4L1187.6 253L1182.3 254.6L1177.1 256.1L1172.2 257.7L1166.2 259.8L1160.1 262.1L1154.5 264.5L1149.8 266.8L1146.5 268.5Z" fill="#000"/>
<path d="M1157.7 261.3L1156.4 262L1155.2 265.3L1153.6 269.9L1151.8 275.2L1150.2 280.7L1148.9 285.7L1147.3 290.9L1145.8 295.9L1144.2 300.9L1142.6 306.6L1141.2 311.6L1139.7 316.9L1138.2 322.4L1136.7 328.1L1135.3 333.7L1133.8 339.7L1132.3 346L1130.9 352.2L1129.7 358.1L1129.1 363.4L1129.6 370.5L1131.2 375.9L1132.4 379.3L1133.6 380.1L1134.4 378.9L1133.9 375.3L1133.3 370.1L1133.5 363.6L1134.3 358.9L1135.4 353.2L1136.8 347L1138.3 340.8L1139.7 334.9L1141.1 329.2L1142.6 323.6L1144.1 318.1L1145.6 312.8L1147 307.8L1148.7 302.3L1150.2 297.2L1151.8 292.3L1153.3 286.9L1154.7 281.9L1156 276.3L1157.1 270.8L1157.9 266L1158.4 262.6Z" fill="#000"/>
<path d="M1263.6 238.8L1262.1 238.5L1259.1 240.1L1255 242.1L1250.1 244.7L1244.9 247.7L1239.5 251.2L1234 254.7L1228.7 258.2L1223.8 261.5L1219.2 264.7L1214.6 268L1209.9 271.3L1205.4 274.6L1200.9 278.1L1196.5 281.6L1192.2 285.1L1188.1 288.8L1183.7 293.2L1179.4 297.7L1175.3 302.3L1171.4 307L1167.7 311.6L1164.1 316.1L1160.8 320.4L1157.1 325.2L1153.5 329.9L1150.3 334.4L1147.2 338.9L1144.4 343.3L1141.8 347.8L1138.9 353.5L1136.5 359.4L1134.7 365.2L1133.4 370L1132.4 373.5L1133 374.9L1134.4 374.3L1136 371L1138.1 366.4L1140.6 361.1L1143.1 355.4L1145.8 350L1148.3 345.8L1151.1 341.4L1154 337.1L1157.3 332.6L1160.7 328L1164.4 323.2L1167.8 318.9L1171.3 314.5L1175 309.9L1178.8 305.3L1182.8 300.8L1187 296.4L1191.3 292.2L1195.2 288.6L1199.4 285.1L1203.7 281.7L1208.1 278.3L1212.7 275L1217.2 271.7L1221.8 268.5L1226.4 265.3L1231.2 262L1236.5 258.6L1241.9 255.1L1247.3 251.7L1252.4 248.3L1256.8 245.2L1260.5 242.4L1263.3 240.3Z" fill="#000"/>
<path d="M1163.5 279.1L1162.6 280.2L1162.7 283.9L1162.9 288.9L1163.2 294.9L1163.7 301.3L1164.2 307.6L1164.6 313.5L1164.6 318.9L1164.6 324.3L1164.4 329.6L1164.2 335.1L1163.9 340.8L1163.6 346.7L1163.2 352.3L1162.7 358.7L1162.2 365.2L1161.8 371.7L1161.6 377.6L1161.6 382.7L1161.6 386.3L1162.5 387.4L1163.6 386.5L1164.2 382.9L1165 377.9L1165.9 372L1166.5 365.6L1167 359L1167.5 352.6L1167.8 346.9L1168.2 341L1168.5 335.3L1168.7 329.8L1168.9 324.3L1168.9 318.9L1168.8 313.3L1168.5 307.3L1168 300.9L1167.2 294.4L1166.3 288.5L1165.3 283.6L1164.6 280Z" fill="#000"/>
<path d="M1163.1 389.5L1162.5 391.1L1163.4 394.3L1164.7 399L1166.5 404.1L1168.6 408.6L1171.6 413.2L1174.7 417.2L1178.1 421L1181.9 424.9L1185.9 428.8L1190 432.6L1194.5 436.4L1199.1 440.1L1203.5 443.5L1207.6 446.3L1211.4 448.8L1215.4 451.2L1219.6 454L1224 456.9L1228.9 459.6L1234.8 462.2L1241.1 464.3L1245.5 465.7L1247.1 465.1L1246.5 463.5L1242.5 461.2L1236.8 458L1231.3 455L1226.8 452.3L1222.5 449.5L1218.2 446.8L1214.3 444.2L1210.5 441.8L1206.7 439.1L1202.4 435.9L1197.9 432.3L1193.6 428.6L1189.5 424.9L1185.7 421.2L1182.1 417.4L1178.8 413.7L1175.9 410.1L1173.2 406L1171 402L1168.6 397.4L1166.3 393.1L1164.7 390.1Z" fill="#000"/>
<path d="M1255.3 462L1256.5 463L1259.9 463L1264.3 462.9L1269.7 462.7L1275.7 462.1L1282 461.1L1288.3 459.8L1293.1 458.6L1298.3 457.3L1303.7 455.8L1309.3 454.2L1314.8 452.6L1320.3 450.8L1325.5 449L1330.4 447.2L1336.3 444.6L1341.8 442L1346.9 439.2L1351.9 436.3L1356.9 433.3L1362 430.3L1366.6 427.5L1371.3 424.5L1376.1 421.4L1380.7 418.2L1385.3 415.2L1389.5 412.2L1393.5 409.4L1398.4 405.7L1402.8 402.3L1406.9 399L1410.7 395.8L1414.5 392.5L1419.3 388.1L1423.9 383.7L1428 379.3L1431.3 375.3L1434.2 370.6L1435.8 366.6L1436.8 364L1436.3 362.5L1434.8 363L1433.3 365.3L1431 368.6L1427.7 372.5L1424.3 375.9L1420.3 380.1L1415.8 384.4L1411.1 388.7L1407.4 391.9L1403.7 395.1L1399.7 398.3L1395.4 401.7L1390.5 405.2L1386.6 408L1382.4 411L1377.9 414L1373.3 417.1L1368.6 420.2L1363.9 423.2L1359.4 425.9L1354.3 429L1349.4 431.9L1344.5 434.7L1339.5 437.4L1334.2 440L1328.4 442.4L1323.7 444.2L1318.7 446L1313.3 447.7L1307.8 449.4L1302.4 450.9L1297 452.4L1291.9 453.7L1287.1 454.8L1281.1 456.1L1275 457.1L1269.2 458.1L1263.9 459.1L1259.5 460L1256.3 460.8Z" fill="#000"/>
<path d="M1181.4 269.1L1182.9 269.6L1187.1 268L1192.9 265.6L1198.8 263.7L1203.1 262.8L1208 262.1L1212.7 261.7L1216.4 261.7L1222.2 262.9L1226 264.7L1227.6 266.8L1228.2 268.8L1229.5 269.7L1230.4 268.4L1230.2 265.7L1228.4 262.1L1223.9 258.8L1217.2 256.7L1212.5 256.6L1207.4 257L1202.2 257.8L1197.2 258.9L1191.1 261.6L1185.6 265.1L1181.9 267.6Z" fill="#000"/>
<path d="M1184.4 292.2L1185.1 293.7L1188.2 295.3L1192.7 297.5L1197.4 299.2L1201.9 300.1L1206.3 300.7L1210.6 300.8L1216.2 299.6L1220.1 298.3L1221 297L1219.7 296.1L1215.8 296.2L1210.4 296L1206.8 295.6L1202.7 295L1198.6 294.2L1194.1 293.2L1189.3 292.2L1185.9 291.5Z" fill="#000"/>
<path d="M1238.9 291.6L1237.7 292.4L1236.7 295.6L1235.3 300L1233.6 304.2L1231.2 308.1L1228.3 312.2L1225.4 316.2L1222.6 320.4L1219.9 324.5L1218.1 327.3L1218.2 328.8L1219.7 328.7L1222.2 326.3L1225.6 322.8L1229 319L1232.1 314.9L1235.1 310.6L1237.6 306L1239 301L1239.5 296.1L1239.7 292.8Z" fill="#000"/>
<path d="M1217 327.2L1217 328.8L1218.9 331.6L1222 335.4L1225.9 338.5L1230.5 340.5L1235.1 341.3L1238.4 341.6L1239.8 340.8L1239 339.4L1236.2 337.9L1232.2 336L1228.5 334.3L1225.1 331.8L1221.4 329.1L1218.6 327.2Z" fill="#000"/>
<path d="M1279.9 267.5L1281.4 267L1283.3 264.1L1286 260.1L1289.3 256.8L1292.4 254.9L1296.2 253L1300.5 251.4L1304.9 250.2L1309.6 249.4L1314.6 249L1319.8 249L1325 249.2L1330.5 249.9L1336.5 250.8L1342 251.5L1345.8 252L1347.2 251.2L1346.4 249.8L1342.7 248.5L1337.4 246.7L1331.3 245.1L1325.4 244.2L1319.9 243.9L1314.4 243.9L1309 244.4L1303.9 245.2L1298.9 246.6L1294.2 248.4L1289.9 250.5L1286.1 253.2L1282.6 257.8L1280.6 262.7L1279.4 266Z" fill="#000"/>
<path d="M1278.3 292.3L1279.1 293.7L1283.1 295.5L1289 297.8L1295.7 299.3L1300.9 299.4L1306.2 299.1L1311.7 298.4L1317.5 297.2L1322.8 295.8L1328.6 293.8L1334.2 291.3L1339 289L1342.3 287.4L1343 285.9L1341.5 285.2L1337.9 286.1L1332.8 287.4L1327 289L1321.3 290.8L1316.3 292.2L1310.9 293.2L1305.7 293.9L1300.8 294.2L1296.3 294.1L1290 293.5L1284 292.3L1279.7 291.5Z" fill="#000"/>
<path d="M1218.5 375L1220 374.3L1221.6 370.8L1223.8 366.3L1226.5 363.3L1230.6 361.8L1236.1 360.9L1241.6 360.8L1246.9 361.6L1252.2 363.3L1257.3 365.7L1261 368.1L1264.8 371L1268.2 374.2L1271 377.4L1273.9 382.4L1275.9 387.8L1276.9 392.8L1276.5 397.4L1275.1 401.9L1273.2 406L1270.3 410L1266.7 414L1264.1 416.8L1263.9 418.4L1265.5 418.6L1268.8 416.3L1273.3 412.9L1277.2 408.6L1279.8 403.8L1281.5 398.4L1281.9 392.6L1280.8 386.4L1278.5 380.2L1275.2 374.6L1271.9 370.7L1268.1 367.1L1263.9 363.9L1259.7 361.3L1254 358.6L1248 356.7L1242 355.8L1235.6 355.8L1229.2 356.9L1223.7 359.5L1220.2 364.3L1218.7 369.8L1217.8 373.5Z" fill="#000"/>
<path d="M1218.9 372.8L1217.8 373.9L1217.4 377.6L1217 383.1L1217.5 389L1218.7 393.5L1220.3 398.3L1222.5 402.9L1225.3 406.9L1229.7 410.8L1235 413.6L1241.5 415L1246.7 415L1252.6 414.3L1258.4 412.9L1263.5 411.5L1267 410.5L1267.9 409.2L1266.6 408.3L1263 408.5L1257.8 408.9L1251.9 409.5L1246.4 410L1242.1 410L1236.7 408.8L1232.6 406.6L1229.1 403.5L1226.9 400.4L1225.1 396.4L1223.5 392L1222.3 388L1221.1 382.8L1220.5 377.6L1220 373.9Z" fill="#000"/>
<path d="M1361 306.2L1359.7 306.9L1358.4 310.4L1356.6 315.4L1354.7 321.4L1353.2 327.5L1352.2 332.5L1351.2 337.9L1350.3 343.5L1349.5 349.2L1349 355L1348.8 361L1348.9 367.2L1349.2 373.4L1349.6 379.3L1350 384.5L1350.9 390.5L1352.2 395.9L1353.5 400.2L1354.5 403.3L1355.7 404.1L1356.5 402.9L1356.2 399.7L1355.7 395.2L1355.1 389.9L1354.6 384.1L1354.2 378.9L1353.8 373.1L1353.5 367.1L1353.4 361L1353.6 355.2L1354.1 349.7L1354.8 344.2L1355.8 338.7L1356.8 333.4L1357.8 328.5L1359 322.4L1360.2 316.4L1361.1 311.2L1361.7 307.5Z" fill="#000"/>
<path d="M1360.8 384.5L1359.8 385.3L1358.7 389.4L1357.7 394.2L1355.9 398.8L1354.7 402.7L1355.1 403.9L1356.3 403.5L1359 400.3L1361.5 395.4L1362.1 389.8L1361.6 385.5Z" fill="#000"/>
<path d="M1379.1 249.9L1378.5 251.3L1379.6 254.9L1381.3 259.8L1383.4 265.5L1385.6 271.3L1387.6 276.7L1389.1 281.7L1390.5 286.8L1391.7 292L1392.8 297.4L1393.6 303.3L1394.2 309L1394.7 315.6L1395.1 322.5L1395.8 329L1396.5 334.5L1397.1 338.5L1398.3 339.5L1399.3 338.3L1399.5 334.4L1399.8 328.8L1399.9 322.3L1399.7 315.3L1399.2 308.6L1398.6 302.7L1397.6 296.6L1396.5 290.9L1395.3 285.6L1393.9 280.4L1392.2 275.1L1390.2 269.5L1387.7 263.6L1384.9 258.2L1382.4 253.7L1380.5 250.5Z" fill="#000"/>
<path d="M1414.7 251.9L1413.9 253.1L1414.3 257.1L1415 262.8L1416 269.3L1417.5 276.2L1419 282.6L1420.3 287.8L1421.7 293.1L1423.1 298.4L1424.6 303.6L1426 308.9L1427.3 313.9L1428.7 319.9L1430 325.9L1431.3 331.7L1432.4 337.4L1433.5 343L1434.5 348.8L1435.6 354.9L1436.9 360.6L1438 365.4L1438.9 368.9L1440.1 369.7L1440.9 368.5L1440.8 365L1440.5 360L1440 354.2L1439.1 348.1L1438.1 342.2L1437 336.5L1435.8 330.8L1434.5 324.9L1433.2 318.9L1431.7 312.9L1430.4 307.7L1429 302.4L1427.6 297.1L1426.1 291.9L1424.7 286.6L1423.4 281.6L1422 275.2L1420.4 268.4L1418.7 262L1417.1 256.5L1415.9 252.7Z" fill="#000"/>
<path d="M1417 251.9L1416 252.9L1415.5 256.4L1414.8 261.3L1414.1 267.2L1413.7 273.6L1413.6 280.2L1413.5 286.7L1413.7 292.7L1414.1 298.3L1414.7 303.9L1415.5 309.4L1416.3 314.8L1417.2 320.1L1418.1 325.4L1418.9 330.5L1419.8 336.3L1420.8 341.9L1421.7 347.5L1422.7 353L1423.9 358.5L1425.2 364L1426.6 369.7L1428 375.5L1429.7 381.3L1431.4 387.1L1433.5 392.6L1435.8 397.9L1438.8 403L1442.4 408.1L1446.2 412.8L1450.1 416.8L1453.4 420.1L1455.8 422.6L1457.3 422.7L1457.4 421.2L1455.5 418.4L1452.8 414.5L1449.6 410.1L1446.1 405.3L1442.7 400.5L1440 395.7L1437.8 390.9L1435.8 385.6L1434.1 380L1432.5 374.3L1431 368.6L1429.6 363L1428.4 357.5L1427.2 352.1L1426.2 346.7L1425.3 341.2L1424.4 335.5L1423.5 329.7L1422.6 324.6L1421.7 319.4L1420.9 314.1L1420 308.7L1419.3 303.3L1418.7 297.9L1418.3 292.5L1418.1 286.7L1418.2 280.3L1418.4 273.7L1418.5 267.4L1418.4 261.5L1418.2 256.6L1418 252.9Z" fill="#000"/>
<path d="M1406.6 342.5L1407.6 341.5L1407.9 338L1408.6 334L1410 331.1L1411.8 328.8L1413.7 327.5L1415.4 327L1417.3 327.7L1419.6 329.5L1421.8 332.3L1423.6 335.7L1424.8 338.7L1425.5 341.6L1425.5 344.8L1425.1 347.8L1424.3 349.9L1423.6 351.3L1423.8 352.7L1425.2 352.5L1426.4 351.1L1427.9 348.8L1429 345.4L1429.5 341.4L1429.1 337.5L1427.8 333.7L1425.6 329.8L1422.8 326.3L1419.5 323.7L1415.6 322.4L1411.7 323.3L1408.6 325.8L1406.4 329.2L1405.2 333.2L1405.2 337.9L1405.6 341.5Z" fill="#000"/>
<path d="M1420.9 332.3L1420.4 333.4L1421 337.5L1422 342.2L1422.2 346.7L1422.5 350.3L1423.2 351.2L1424.1 350.5L1425.3 346.8L1425.6 341.8L1424.1 336.6L1422 332.8Z" fill="#000"/>
<circle cx="1407.6" cy="257" r="1.5" fill="#000"/>
<path d="M1283.5 465.4L1282.8 466.7L1283.4 471.1L1283.8 476.8L1283.6 480.6L1283 484.8L1282.4 488.5L1281.4 493.2L1280.5 496.5L1281 497.8L1282.3 497.3L1284.3 494.4L1286.6 489.7L1287.6 485.6L1288.2 481L1288.4 476.4L1286.7 470.3L1284.8 466.1Z" fill="#000"/>
<path d="M1433.9 405.8L1432.6 406.3L1431 409.3L1428.9 413.4L1426.5 418.4L1424.4 423.8L1422.9 429.2L1421.8 434.4L1421 439.8L1420.3 445.4L1419.9 451.1L1419.8 456.8L1419.9 462.7L1420.2 468.8L1420.8 474.9L1421.7 480.9L1422.9 486.6L1424.6 491.8L1426.6 496.8L1428.8 501.5L1431.2 505.9L1433.7 510.1L1437.4 515.2L1441.6 519.9L1445.6 523.7L1448.3 526.3L1449.8 526.4L1449.9 524.9L1447.6 521.8L1444.4 517.5L1440.8 512.6L1437.5 507.7L1435.1 503.7L1432.8 499.5L1430.7 495L1428.8 490.3L1427.3 485.4L1426.1 480.1L1425.3 474.4L1424.7 468.5L1424.4 462.5L1424.2 456.8L1424.4 451.3L1424.8 445.8L1425.4 440.5L1426.3 435.2L1427.3 430.2L1428.7 425.2L1430.4 419.8L1432.1 414.7L1433.5 410.3L1434.4 407.1Z" fill="#000"/>
<path d="M1480.7 450.9L1479.7 451.3L1478.2 454.5L1476 459L1473.6 464.4L1471.4 469.9L1469.4 475L1467.8 479.8L1466.2 484.7L1464.6 489.4L1463.3 493.9L1462.1 498.1L1460.9 504.5L1460.3 510.1L1459.9 514L1460.5 514.8L1461.3 514.2L1462.2 510.5L1463.6 505.1L1465.3 498.9L1466.4 494.9L1467.8 490.4L1469.3 485.7L1470.9 480.9L1472.6 476.2L1474.4 471.1L1476.5 465.5L1478.4 460L1480 455.3L1481.1 451.9Z" fill="#000"/>
<path d="M1416.6 434.3L1415.1 434L1411.7 435.9L1406.7 438.5L1401.2 442.2L1396.3 446.8L1392.8 451.2L1389.4 456L1386.1 461.3L1383.3 467L1381.2 472.9L1380.1 478L1379.4 483.3L1379.2 488.7L1379.3 494.2L1379.6 499.7L1380.1 505L1380.7 510.4L1381.6 515.9L1382.7 521.4L1384 526.8L1385.7 532L1387.6 536.9L1390.3 542.4L1393.5 547.6L1397 552.4L1400.8 556.8L1404.9 560.7L1409.1 564.2L1413.6 567.1L1418.4 569.6L1423.4 571.8L1428.6 573.7L1434.5 575.3L1440.9 576.6L1447.3 577.6L1453.3 578.4L1458.3 578.8L1464.7 578.8L1469.2 578.2L1472.2 577.7L1473.1 576.6L1472 575.7L1469.1 575.6L1464.7 575.3L1458.7 574.6L1453.8 573.8L1448 573.1L1441.7 572.1L1435.5 570.8L1430 569.3L1425.1 567.5L1420.4 565.4L1416 563.1L1411.8 560.4L1407.9 557.3L1404.2 553.6L1400.6 549.5L1397.3 545L1394.4 540.2L1391.8 535.1L1390 530.5L1388.5 525.6L1387.2 520.4L1386.1 515.1L1385.3 509.8L1384.7 504.6L1384.2 499.3L1383.9 494.1L1383.8 488.8L1384.1 483.7L1384.6 478.7L1385.6 474.1L1387.5 468.8L1390.1 463.6L1393.2 458.6L1396.5 454L1399.7 450L1404.1 445.6L1408.8 441.6L1413.2 438.2L1416.3 435.8Z" fill="#000"/>
<path d="M1416.5 441.8L1415.3 441.4L1411.9 442.9L1406.9 445L1401.5 447.7L1396.7 451.1L1392.9 455.1L1389.4 459.5L1386.3 464.1L1383.8 468.4L1381.5 474.3L1380.2 479.8L1379.5 483.7L1380.1 484.7L1381.1 484.1L1382.5 480.5L1384.5 475.4L1387.2 470.2L1389.6 466.2L1392.5 461.8L1395.8 457.7L1399.3 454.1L1403.5 450.9L1408.4 447.7L1412.9 445L1416.1 443Z" fill="#000"/>
<path d="M1390.1 410.1L1388.9 410.5L1387.2 413.4L1384.6 417.5L1381.9 422.5L1379.3 427.8L1377.3 433.2L1375.8 438.5L1374.5 444.1L1373.4 449.7L1372.6 455.4L1372.1 460.9L1371.9 466.5L1372 472.2L1372.4 477.7L1373.3 482.7L1374.7 487L1380.3 491.3L1385.3 492.1L1386.4 491.4L1385.7 490.3L1381.5 489.1L1377.5 485L1376.9 481.9L1376.3 477.3L1375.9 472L1375.8 466.5L1375.9 461.1L1376.4 455.9L1377.2 450.4L1378.3 444.9L1379.6 439.5L1381.1 434.4L1382.9 429.3L1385.2 424L1387.4 418.9L1389.2 414.5L1390.5 411.3Z" fill="#000"/>
<path d="M1378.5 485.2L1377.4 485.7L1376 489.1L1373.9 493.9L1372 499.4L1371.1 504.7L1371.3 511L1372.6 516.9L1374.3 522.1L1376.5 526.6L1379.4 530.3L1382.5 533.2L1387.6 535.2L1391.6 535.9L1392.7 535.2L1392 534.1L1388.5 533L1384.3 530.6L1382.1 528L1379.8 524.6L1377.9 520.7L1376.3 515.9L1375.2 510.5L1374.9 504.9L1375.6 500.2L1376.9 494.8L1378.2 489.8L1379 486.3Z" fill="#000"/>
<path d="M1123.4 538L1124.8 537.6L1127.2 534.4L1130.5 529.7L1134.3 525.2L1137.5 522.1L1141.1 518.7L1144.9 515.7L1148.7 513.4L1154.1 511.2L1159.5 509.9L1164.9 509.9L1168.9 511L1173.2 513L1177.4 515.6L1181.4 518.2L1186 521.7L1190.1 525.4L1193.6 528.9L1197.8 534.1L1200.6 538.1L1202 538.5L1202.4 537.1L1200.4 532.5L1196.8 526.3L1193.3 522.2L1189 518.2L1184 514.4L1179.9 511.7L1175.4 509L1170.5 506.7L1165.5 505.3L1159 505.3L1152.7 506.8L1146.7 509.2L1142.3 511.9L1138.1 515.2L1134.3 518.8L1130.9 522.4L1127.3 527.6L1124.7 532.9L1123 536.6Z" fill="#000"/>
<path d="M1156.7 539.1L1157.9 539.9L1162 539.5L1168 538.7L1174.6 537.6L1180.8 536L1186.4 534.5L1191.8 532.8L1197.5 530.8L1203.6 528.4L1208 526.4L1212.6 524.2L1217.3 521.7L1222.1 519.3L1226.7 516.9L1231.3 514.7L1237 512.1L1243.1 509.4L1248.8 506.6L1253.6 504.1L1257 502.3L1257.6 500.9L1256.2 500.3L1252.5 501.5L1247.3 503.2L1241.3 505.3L1235.1 507.9L1229.3 510.5L1224.7 512.7L1219.9 515.2L1215.2 517.6L1210.5 520L1206 522.3L1201.8 524.2L1195.9 526.5L1190.4 528.4L1185.1 530L1179.6 531.6L1173.5 533.2L1167.1 534.9L1161.4 536.6L1157.5 537.9Z" fill="#000"/>
<path d="M1255.9 501.8L1257.1 502L1260.9 500L1265.8 498L1271.6 497.4L1275.3 497.8L1275.3 500.2L1274.1 504L1271 506.3L1267.5 508L1267 509.1L1268.1 509.6L1272.1 508.7L1276.7 506.2L1279.1 500.7L1277.9 494.8L1271.6 493.5L1264.8 494.6L1259.6 497.6L1256.1 500.6Z" fill="#000"/>
<path d="M1125.4 535.4L1124.2 536L1122.6 539.5L1120.5 544.3L1118.1 550.1L1115.8 556.5L1113.7 563.2L1111.9 569.7L1110.5 575.1L1109.2 580.9L1107.9 586.7L1106.7 592.7L1105.6 598.6L1104.8 604.4L1104.2 610L1103.8 616.3L1103.7 622.4L1103.8 628.3L1104.1 634.1L1104.7 639.9L1105.5 645.7L1106.7 651.5L1108.2 657.3L1109.9 663.1L1111.8 668.7L1113.7 673.9L1115.7 678.7L1118.8 684.9L1122.1 690.4L1125.4 695.1L1128.6 699.1L1132.9 703.1L1136.9 705.7L1139.6 707.4L1141 707.2L1140.8 705.8L1138.4 703.8L1135.1 700.7L1131.6 696.5L1128.8 692.6L1125.6 688.1L1122.5 682.9L1119.5 676.9L1117.6 672.4L1115.7 667.3L1113.9 661.9L1112.2 656.2L1110.8 650.5L1109.7 644.9L1108.9 639.4L1108.3 633.8L1107.9 628.1L1107.9 622.4L1108 616.5L1108.4 610.4L1109 605L1109.8 599.3L1110.8 593.5L1112 587.6L1113.3 581.8L1114.6 576.1L1115.9 570.7L1117.7 564.4L1119.8 557.8L1121.9 551.4L1123.7 545.4L1125.1 540.3L1126 536.6Z" fill="#000"/>
<path d="M1163.1 541.7L1161.8 542.2L1159.9 545.5L1157.1 550L1154.1 555.5L1151.1 561.7L1148.2 568.2L1145.7 574.5L1143.9 579.8L1142.1 585.4L1140.4 591.1L1138.8 596.9L1137.3 602.8L1135.8 608.8L1134.4 614.7L1133.1 619.9L1131.8 625.3L1130.6 630.8L1129.4 636.2L1128.3 641.7L1127.2 647.1L1126.3 652.4L1125.5 657.5L1124.8 663.3L1124.1 669L1123.6 674.7L1123.2 680.2L1123 685.6L1122.9 690.6L1123 695.4L1123.5 701.4L1124.2 706.9L1125.3 711.8L1126.6 716.5L1128.1 721.1L1130.6 727.1L1133.9 732.8L1137.1 737.6L1139.4 740.9L1140.7 741.2L1141 739.9L1139.4 736.3L1137 731.1L1134.4 725.4L1132.1 719.7L1130.7 715.3L1129.4 710.8L1128.4 706.1L1127.6 701L1127.2 695.2L1127.1 690.6L1127.2 685.7L1127.4 680.5L1127.8 675L1128.3 669.5L1128.9 663.8L1129.7 658.1L1130.5 653L1131.4 647.8L1132.4 642.5L1133.5 637.1L1134.7 631.7L1135.9 626.3L1137.2 620.9L1138.4 615.7L1139.9 609.8L1141.4 603.9L1142.9 598L1144.5 592.3L1146.1 586.6L1147.9 581.2L1149.7 575.9L1152.1 569.8L1154.9 563.5L1157.7 557.3L1160.2 551.5L1162.2 546.6L1163.6 543Z" fill="#000"/>
<path d="M1255.7 503L1254.5 503.4L1252.6 506.3L1249.9 510.4L1246.8 515.3L1243.8 520.8L1240.9 526.4L1238.5 531.9L1236.4 537.2L1234.5 542.9L1232.7 548.7L1231 554.3L1229.6 559.7L1228.4 564.7L1227 571.5L1225.9 577.8L1225.6 583.4L1226.3 588.5L1231.3 593.2L1236.2 594.7L1237.3 594.2L1236.8 593.1L1232.7 591.2L1229.3 586.9L1229.3 583.5L1229.8 578.3L1230.8 572.2L1232.2 565.5L1233.4 560.7L1234.8 555.4L1236.4 549.8L1238.2 544.1L1240.1 538.6L1242.1 533.3L1244.4 528.1L1247.2 522.6L1250 517L1252.6 511.9L1254.6 507.5L1256.1 504.2Z" fill="#000"/>
<path d="M1274.4 506.8L1273.3 507.3L1271.7 510.9L1269.5 516L1267.1 522L1265 528.5L1263.4 534.7L1262.4 539.9L1261.4 545.5L1260.6 551.2L1260 556.6L1259.8 561.4L1260.1 565.6L1263.6 570.9L1267.5 572.2L1268.6 571.7L1268.1 570.6L1265.3 569.3L1263.1 564.6L1263.4 561.5L1263.8 556.9L1264.4 551.7L1265.2 546.1L1266.2 540.6L1267.2 535.5L1268.7 529.5L1270.7 523.2L1272.5 517L1274 511.7L1274.9 507.9Z" fill="#000"/>
<path d="M1378.8 474.5L1377.5 474.2L1374.5 475.6L1370.5 477.3L1365.8 479.5L1360.6 482.2L1355.1 485.3L1349.6 488.7L1344.3 492.2L1339.2 495.8L1335 499.2L1330.8 502.8L1326.6 506.6L1322.3 510.6L1318.2 514.6L1314 518.8L1309.8 522.9L1305.6 527L1301.4 531.1L1297.3 535.1L1293.1 539.1L1288.9 543.1L1284.7 547.1L1280.5 551.2L1276.3 555.4L1272.1 559.7L1267.9 564.2L1263.7 568.8L1260.3 572.7L1256.9 576.7L1253.5 580.8L1250 585L1246.6 589.2L1243.2 593.6L1239.8 598L1236.4 602.5L1232.9 607.1L1229.5 611.7L1226.1 616.5L1222.9 621L1219.7 625.6L1216.5 630.3L1213.3 635.1L1210.1 640L1206.9 644.9L1203.7 649.8L1200.6 654.8L1197.5 659.7L1194.4 664.6L1191.4 669.4L1188.4 674.2L1185.2 679.3L1182.1 684.4L1179 689.5L1175.9 694.6L1172.9 699.7L1169.9 704.7L1166.9 709.7L1164.1 714.7L1161.3 719.7L1158.5 724.6L1155.9 729.4L1152.9 734.8L1150 740.4L1147.1 746L1144.3 751.7L1141.5 757.2L1138.9 762.5L1136.5 767.6L1134.3 772.2L1132.4 776.5L1130.7 780.2L1127.7 789.1L1127 794.2L1126.7 797.3L1127.4 798.4L1128.5 797.7L1129.3 794.7L1130.8 790.1L1134.5 781.8L1136.2 778.2L1138.1 774L1140.3 769.4L1142.7 764.3L1145.3 759L1148 753.5L1150.9 747.9L1153.7 742.3L1156.7 736.8L1159.5 731.4L1162.2 726.6L1164.9 721.7L1167.7 716.8L1170.6 711.9L1173.5 706.9L1176.5 701.8L1179.5 696.8L1182.6 691.7L1185.7 686.6L1188.8 681.5L1192 676.4L1194.9 671.7L1198 666.8L1201 662L1204.1 657L1207.3 652.1L1210.5 647.2L1213.6 642.3L1216.8 637.4L1220 632.6L1223.2 627.9L1226.4 623.4L1229.5 618.9L1232.9 614.2L1236.3 609.6L1239.7 605L1243.1 600.5L1246.5 596.2L1249.9 591.9L1253.3 587.6L1256.7 583.5L1260.1 579.5L1263.5 575.5L1266.9 571.6L1271 567L1275.2 562.6L1279.3 558.3L1283.5 554.2L1287.6 550.1L1291.8 546.1L1296 542.1L1300.2 538.1L1304.4 534.1L1308.5 530L1312.7 525.9L1316.9 521.7L1321.1 517.6L1325.2 513.6L1329.4 509.7L1333.5 506L1337.7 502.5L1341.8 499.2L1346.6 495.7L1351.9 492.2L1357.3 489L1362.6 485.9L1367.6 482.9L1372 480.2L1375.7 477.7L1378.5 475.8Z" fill="#000"/>
<path d="M1377.6 540.8L1376.2 540.6L1373.2 542.5L1369.3 544.9L1364.6 547.9L1359.6 551.5L1354.4 555.5L1349.1 559.8L1343.9 564.2L1339 568.5L1335.2 572.1L1331.5 575.8L1327.7 579.7L1323.9 583.6L1320.1 587.7L1316.3 591.8L1312.5 596L1308.8 600.2L1305 604.5L1301.2 608.7L1297.4 613L1293.7 617.4L1289.9 621.8L1286.1 626.3L1282.4 630.8L1278.6 635.4L1274.8 640L1271.1 644.6L1267.3 649.3L1263.6 653.9L1260.1 658.1L1256.7 662.5L1253.2 666.8L1249.7 671.2L1246.2 675.6L1242.7 680L1239.3 684.4L1235.9 688.7L1232.5 693L1229.2 697.3L1226 701.4L1222.2 706.4L1218.3 711.4L1214.6 716.3L1210.9 721.1L1207.3 725.9L1203.7 730.5L1200.2 735.1L1196.8 739.6L1193.4 744L1189.5 749.1L1185.5 754.3L1181.5 759.5L1177.6 764.5L1174.1 769.3L1171.2 773.7L1168.7 777.5L1166.9 780.4L1167.1 781.8L1168.5 781.6L1170.8 779.1L1173.9 775.8L1177.4 771.8L1181.2 767.2L1185.1 762.2L1189.1 757L1193.1 751.8L1197 746.8L1200.4 742.4L1203.8 737.9L1207.3 733.3L1210.9 728.6L1214.5 723.8L1218.2 719L1221.9 714.1L1225.7 709.2L1229.6 704.2L1232.8 700L1236.1 695.8L1239.4 691.5L1242.8 687.2L1246.3 682.8L1249.7 678.4L1253.2 674L1256.7 669.6L1260.2 665.3L1263.6 661L1267 656.7L1270.8 652.1L1274.6 647.5L1278.3 642.9L1282.1 638.3L1285.8 633.7L1289.6 629.2L1293.3 624.7L1297.1 620.3L1300.8 616L1304.6 611.7L1308.3 607.4L1312.1 603.2L1315.9 599L1319.7 594.8L1323.4 590.7L1327.2 586.7L1330.9 582.8L1334.7 579L1338.4 575.3L1342 571.9L1346.8 567.6L1351.9 563.3L1357.2 559.1L1362.4 555.1L1367.2 551.3L1371.4 547.7L1374.8 544.6L1377.4 542.2Z" fill="#000"/>
<path d="M1491.2 576.9L1489.9 577.2L1487.8 579.9L1485 583.5L1481.7 587.9L1478.3 592.9L1474.9 598.3L1471.7 603.8L1468.7 609.2L1466.4 614L1464.1 618.9L1461.8 624.1L1459.6 629.3L1457.4 634.5L1455.3 639.7L1453.2 644.7L1451.2 649.5L1448.8 655L1446.4 660.6L1444 666.1L1441.7 671.5L1439.6 676.4L1437.8 680.9L1436.4 684.6L1434.1 692.1L1433.4 695L1434 696.2L1435.2 695.6L1436.4 692.9L1439.8 686L1441.5 682.4L1443.4 678.1L1445.5 673.1L1447.8 667.8L1450.2 662.2L1452.7 656.6L1455 651.1L1457.1 646.3L1459.2 641.3L1461.3 636.1L1463.5 630.9L1465.7 625.7L1467.9 620.7L1470.2 615.8L1472.5 611.2L1475.3 605.9L1478.5 600.5L1481.9 595.2L1485 590L1487.7 585.3L1489.9 581.3L1491.5 578.2Z" fill="#000"/>
<path d="M1433.5 692.5L1432.7 693.7L1433.1 698L1433.8 704.2L1435.8 711L1437.9 715.3L1440.5 719.8L1443.4 724.3L1446.1 728.6L1448.5 732.3L1452 737.2L1454.8 741L1456.5 744.1L1457.1 748.7L1455.7 752.9L1453.3 755.8L1449.7 759L1444.9 762.5L1441.3 764.9L1437.2 767.4L1432.8 770L1428.4 772.6L1424.2 774.9L1419 777.7L1413.8 780.7L1409.3 783.4L1406.1 785.4L1405.7 786.8L1407.1 787.2L1410.5 785.9L1415.5 784L1421 781.7L1426.4 778.9L1430.6 776.6L1435.1 774L1439.6 771.4L1443.8 768.8L1447.5 766.3L1452.6 762.6L1456.7 759L1459.7 755.1L1461.7 749.1L1460.9 742.9L1458.7 738.5L1455.7 734.5L1452.3 729.7L1450 726.1L1447.3 721.8L1444.5 717.4L1442 713.1L1440 709.4L1437.6 703.2L1435.9 697.4L1434.7 693.3Z" fill="#000"/>
<path d="M1434 692.8L1433 693.2L1431.4 695.8L1429.3 699.6L1426.7 704.1L1423.7 709.3L1421.4 713.3L1418.8 717.9L1416 722.7L1413 727.5L1410.1 732.2L1407.2 736.3L1404.1 740.5L1401 744.3L1398 747.8L1394.6 751.2L1390.8 754.6L1387 757.6L1382.3 760.8L1377.5 764.1L1373 767.3L1369.2 770L1366.5 772L1366.2 773.1L1367.3 773.4L1370.3 771.8L1374.5 769.6L1379.3 766.9L1384.3 763.8L1389.1 760.5L1393.2 757.4L1397.1 753.8L1400.6 750.3L1403.8 746.6L1406.9 742.7L1410.2 738.3L1413.1 734.1L1416.1 729.5L1419.1 724.6L1421.9 719.7L1424.6 715.1L1426.9 711.1L1429.6 705.7L1431.8 700.7L1433.3 696.7L1434.4 693.8Z" fill="#000"/>
<path d="M779 728.9L780.2 729.7L783.4 729.5L787.6 729.1L792.5 728.5L798 727.6L803.9 726.5L810 725.3L816.2 724L822.2 722.7L827.6 721.5L833.4 720.1L839.3 718.6L845.4 717.1L851.5 715.6L857.5 714.1L863.4 712.6L869 711.4L874.3 710.2L880.7 708.9L887 707.8L893.1 706.8L898.8 705.9L904.2 705.1L909.2 704.5L913.7 704L920.4 703.4L925.7 703.3L930.1 703.4L933.7 703.9L939.4 705.7L943.2 708.4L946.9 712.7L949.7 716.8L950.8 718.8L951 719.6L952.3 720.5L953.2 719.2L953 718L952.3 715.6L950.1 710.6L946.4 705.2L941.5 701.5L934.9 699.3L930.5 698.7L925.7 698.5L920.1 698.7L913.3 699.2L908.6 699.8L903.6 700.4L898.1 701.2L892.3 702.1L886.2 703.1L879.8 704.3L873.3 705.6L868 706.7L862.3 708L856.4 709.5L850.4 711L844.2 712.5L838.2 714L832.3 715.5L826.6 716.9L821.2 718.1L815.2 719.4L809.1 720.6L803 721.9L797.1 723L791.7 724.3L786.9 725.6L782.9 726.7L779.8 727.7Z" fill="#000"/>
<path d="M951.4 699.3L952.9 699.2L955.2 696.8L958.3 693.5L962 689.6L965.7 685.4L969.4 681.3L973.2 677.2L977.3 673.1L981.6 668.8L985.9 664.6L990.2 660.6L994.3 656.7L998.5 652.8L1002.6 649.1L1006.8 645.4L1010.9 641.9L1015.1 638.3L1019.2 634.9L1023.4 631.5L1027.5 628.3L1031.6 625.3L1035.8 622.5L1040 619.7L1044.2 617.2L1048.3 614.9L1052 613L1058.3 610.1L1064.1 607.8L1068.1 606.1L1068.8 604.8L1067.5 604.1L1063.2 605L1056.9 606.4L1050.2 608.8L1046.1 610.9L1041.9 613.2L1037.6 615.8L1033.3 618.6L1029 621.5L1024.7 624.6L1020.5 627.9L1016.3 631.3L1012.1 634.8L1007.9 638.3L1003.7 642L999.5 645.7L995.4 649.4L991.2 653.3L987 657.2L982.7 661.3L978.4 665.5L974 669.8L969.9 674L966 678.1L962.2 682.4L958.7 686.9L955.6 691.3L953.1 695.1L951.3 697.8Z" fill="#000"/>
<path d="M1054.7 601.3L1056.1 601.1L1058.6 598.5L1062 594.7L1066 590.2L1069.9 585.5L1073.7 581.2L1077.5 577.3L1081.6 573.5L1085.8 569.7L1090 566.1L1094.2 562.7L1098.5 559.4L1103 556.3L1107.4 553.3L1111.5 550.5L1114.9 548.2L1119.3 545.1L1122.5 543L1125 541.1L1126.7 538.8L1127.2 537.5L1126.6 536.1L1125.2 536.7L1124.9 537.5L1123.2 538.9L1120.8 540.1L1117.2 541.8L1112.5 544.4L1108.9 546.7L1104.8 549.4L1100.3 552.5L1095.8 555.7L1091.4 559.1L1087.1 562.6L1082.8 566.2L1078.5 570.1L1074.3 574L1070.3 578L1066.4 582.5L1062.5 587.4L1059.1 592.4L1056.4 596.8L1054.5 599.9Z" fill="#000"/>
<path d="M960.4 799.4L961.8 800L965.4 799L970.3 797.7L976.2 795.8L982.7 793.3L989.5 790.3L994.1 788.2L999 785.9L1004.2 783.4L1009.6 780.7L1015.1 777.9L1020.6 775.1L1026.1 772.2L1031.4 769.3L1036.1 766.7L1040.9 763.9L1045.8 761.1L1050.6 758.2L1055.4 755.3L1060.1 752.4L1064.7 749.6L1069 746.9L1073.2 744.3L1078.4 740.9L1083.5 737.6L1088.4 734.3L1093 731.2L1097.3 728.2L1101.1 725.6L1104.5 723.3L1110.6 718.9L1114.7 716L1117.3 714L1117.7 712.6L1116.3 712.2L1113.3 713.6L1108.7 715.8L1102.1 719.5L1098.6 721.8L1094.7 724.4L1090.4 727.4L1085.8 730.5L1080.9 733.7L1075.9 737.1L1070.8 740.3L1066.6 743L1062.2 745.7L1057.7 748.5L1053 751.4L1048.2 754.3L1043.4 757.1L1038.6 759.9L1033.9 762.7L1029.2 765.3L1023.9 768.1L1018.5 771L1013 773.8L1007.5 776.6L1002.2 779.2L997 781.7L992.1 784L987.7 786.1L980.9 789L974.6 791.7L969 794.2L964.4 796.4L961 798Z" fill="#000"/>
<path d="M1133.1 704L1131.7 704.2L1129.3 707.1L1125.9 711.3L1122.2 716.3L1118.7 721.6L1115.9 726.7L1113.6 731.4L1111.5 736.2L1109.7 741L1108.2 745.7L1107.3 750.3L1106.8 755.6L1107.1 760.7L1108.1 765.5L1109.5 770.2L1111.5 774.9L1114.1 779.5L1117.1 783.8L1120.4 787.7L1125.9 792L1131.9 795.3L1136.1 797.4L1137.5 797L1137.1 795.6L1133.4 792.8L1128.3 788.8L1123.6 784.5L1120.7 781.1L1117.9 777.1L1115.5 772.9L1113.7 768.6L1112.4 764.4L1111.6 760.1L1111.3 755.7L1111.7 750.9L1112.6 746.8L1113.9 742.5L1115.7 737.9L1117.7 733.3L1119.9 728.7L1122.6 723.9L1125.8 718.6L1128.9 713.3L1131.6 708.7L1133.3 705.4Z" fill="#000"/>
<path d="M1151.8 805.8L1152.2 807.2L1155 809.1L1159 811.8L1164 814.7L1169.3 817.2L1173.8 818.9L1178.5 820.7L1183.6 822.3L1189.1 823.8L1194.8 824.9L1199.9 825.5L1205.2 826L1210.6 826.3L1216.3 826.5L1222 826.4L1227.9 826.2L1233.1 825.9L1238.4 825.3L1243.8 824.7L1249.3 823.9L1254.8 823.1L1260.3 822.1L1265.7 821.2L1271.1 820.1L1276.5 819L1281.9 817.8L1287.3 816.6L1292.7 815.2L1298.1 813.8L1303.5 812.3L1309.1 810.7L1314.9 808.8L1320.8 806.9L1326.5 804.9L1332 803L1336.9 801.3L1341.3 799.8L1347.4 797.4L1352.2 795.3L1355.8 793.5L1358.4 792.3L1359 790.9L1357.6 790.3L1354.9 791L1351 792.1L1346 793.5L1339.7 795.4L1335.4 796.9L1330.5 798.6L1325 800.5L1319.3 802.5L1313.5 804.4L1307.8 806.2L1302.3 807.9L1296.9 809.4L1291.6 810.8L1286.2 812.1L1280.9 813.3L1275.6 814.5L1270.2 815.6L1264.9 816.6L1259.5 817.6L1254.1 818.5L1248.6 819.4L1243.2 820.1L1237.9 820.7L1232.7 821.2L1227.7 821.6L1221.9 821.8L1216.3 821.9L1210.8 821.7L1205.5 821.4L1200.4 821L1195.6 820.3L1190.1 819.3L1184.9 817.9L1180 816.3L1175.4 814.6L1171.1 813L1165.8 810.8L1160.7 808.6L1156.3 806.7L1153.2 805.4Z" fill="#000"/>
<path d="M1298.1 807.3L1298.8 808.6L1302.6 810.2L1308.3 812.4L1315.3 813.6L1319.8 813.4L1324.5 812.9L1329.5 812.1L1335 811L1340.9 809.8L1345.7 808.8L1351.1 807.8L1356.7 806.6L1362.5 805.3L1368.2 803.9L1373.7 802.5L1378.7 800.9L1384.3 798.9L1389.8 796.5L1395 793.8L1399.5 791.2L1403.2 788.9L1405.9 787.2L1406.4 785.9L1405.1 785.4L1402 786.5L1398 788.2L1393.2 790.2L1388 792.4L1382.6 794.7L1377.3 796.7L1372.4 798.1L1367.1 799.5L1361.5 800.9L1355.8 802.2L1350.1 803.4L1344.8 804.4L1340.1 805.4L1334.1 806.6L1328.7 807.6L1323.9 808.4L1319.5 809L1315.5 809.2L1309.1 808.7L1303.4 807.5L1299.4 806.6Z" fill="#000"/>
<path d="M1152.4 805.4L1151.8 806.6L1152.9 810.7L1154.5 816.6L1155.7 823L1156.1 827.9L1156.4 833.4L1156.2 839.1L1155.6 844.9L1154.7 849.7L1153.5 854.7L1151.9 859.8L1150.2 864.7L1148.3 869.3L1145.3 875L1142 880.8L1138.9 886L1136.8 889.7L1137.1 891L1138.4 890.7L1141.1 887.5L1144.9 882.7L1148.9 877.1L1152.1 871.1L1154.1 866.2L1155.9 861.1L1157.5 855.8L1158.8 850.6L1159.8 845.5L1160.4 839.4L1160.6 833.3L1160.3 827.6L1159.7 822.2L1157.9 815.6L1155.4 809.8L1153.6 806Z" fill="#000"/>
<path d="M1406 785.6L1404.8 785.8L1402.1 788.7L1398.3 792.9L1394.2 798.2L1391.2 804.4L1389.8 808.8L1388.7 813.5L1387.9 818.5L1387.2 823.7L1386.6 829.2L1386.1 834.9L1385.7 840.5L1385.4 846.9L1385.2 853.6L1385.2 860.3L1385.4 866.3L1385.7 871.5L1385.9 875.2L1386.8 876.1L1387.7 875.2L1388.1 871.5L1388.5 866.4L1388.9 860.3L1389.1 853.7L1389.3 847.1L1389.6 840.8L1389.9 835.3L1390.5 829.6L1391 824.2L1391.7 819.1L1392.5 814.3L1393.6 809.8L1394.8 805.8L1397.5 800.1L1400.9 794.8L1404 790.2L1406.2 786.8Z" fill="#000"/>
<path d="M1146.9 894.5L1147 896L1149.8 898.7L1153.7 902.5L1158.6 906.5L1164.1 909.9L1168.5 912L1173.2 914.1L1178.2 915.9L1183.7 917.5L1189.8 918.8L1194.6 919.6L1199.8 920.2L1205.2 920.8L1210.9 921.1L1216.6 921.4L1222.3 921.5L1227.9 921.4L1233.3 921.1L1238.7 920.7L1244.2 920.1L1249.6 919.3L1255 918.4L1260.4 917.4L1265.8 916.3L1271.2 915L1276.7 913.6L1282.1 912L1287.5 910.3L1292.9 908.5L1298.3 906.7L1303.7 904.9L1309.1 903.1L1314.6 901.2L1320.1 899.2L1325.6 897.2L1331 895.2L1336.2 893.2L1341.4 891.2L1347.2 888.9L1352.8 886.5L1358.3 884.1L1363.7 881.8L1368.9 879.5L1373.9 877.4L1380.2 874.8L1386.6 872.1L1392.5 869.3L1397.4 866.8L1400.9 864.9L1401.5 863.5L1400.1 862.9L1396.3 864L1391 865.7L1384.8 867.8L1378.4 870.4L1372.1 873L1367 875.2L1361.8 877.4L1356.4 879.8L1351 882.1L1345.4 884.5L1339.6 886.8L1334.5 888.8L1329.3 890.8L1323.9 892.8L1318.5 894.8L1313 896.7L1307.5 898.6L1302.1 900.5L1296.8 902.2L1291.4 904L1286.1 905.8L1280.7 907.5L1275.4 909L1270.1 910.4L1264.8 911.7L1259.5 912.8L1254.2 913.8L1248.9 914.6L1243.6 915.4L1238.3 915.9L1233 916.4L1227.7 916.6L1222.3 916.7L1216.8 916.6L1211.2 916.4L1205.6 916L1200.3 915.5L1195.2 914.9L1190.6 914.2L1184.9 912.9L1179.7 911.4L1174.9 909.7L1170.5 907.7L1166.3 905.7L1161.2 902.7L1156.1 899.4L1151.6 896.4L1148.4 894.4Z" fill="#000"/>
<path d="M1137.9 889.4L1136.8 889.9L1135.1 893.1L1132.8 897.6L1130.3 903L1127.9 908.8L1125.7 914.6L1124 919.4L1122.2 924.5L1120.4 929.7L1118.7 934.9L1117.1 939.9L1115.7 944.7L1114.1 950.5L1112.7 956.4L1111.7 962L1111 966.7L1110.5 970.1L1111.2 971.2L1112.3 970.5L1113.4 967.3L1114.8 962.7L1116.4 957.3L1118 951.5L1119.5 945.9L1121 941.1L1122.6 936.1L1124.3 930.9L1126 925.8L1127.8 920.7L1129.5 916L1131.6 910.3L1133.9 904.4L1135.8 898.8L1137.4 894L1138.4 890.5Z" fill="#000"/>
<path d="M1390.3 875.6L1389.6 876.7L1390.2 880.5L1391.1 885.6L1392.3 891.7L1393.9 898.3L1395.6 904.8L1397.2 910.8L1398.6 915.9L1400.9 923.2L1403.4 929.5L1405.6 934.6L1407.2 938.1L1408.4 938.7L1409 937.5L1408 933.7L1406.5 928.4L1404.6 922L1402.4 914.7L1401.1 909.7L1399.5 903.8L1397.8 897.3L1396.1 890.8L1394.3 884.8L1392.6 879.8L1391.4 876.3Z" fill="#000"/>
<path d="M1121.7 930.1L1120.5 930.7L1119.2 934.1L1117.5 938.6L1115.6 944.1L1113.7 950.2L1112.1 956.6L1110.6 963.1L1109.7 968L1108.8 973.3L1107.9 978.9L1107.1 984.5L1106.3 990.1L1105.5 995.7L1104.9 1000.9L1104.3 1005.9L1103.6 1011.9L1103 1017.5L1102.5 1022.9L1102.1 1028.1L1101.9 1033.3L1101.8 1038.7L1101.9 1044.1L1102.1 1049.3L1102.5 1054.6L1103 1059.9L1103.6 1065.5L1104.3 1071.4L1105 1077.3L1106 1083.9L1107.1 1090.8L1108.2 1097.5L1109.5 1103.7L1110.8 1108.9L1111.7 1112.6L1112.7 1113.4L1113.5 1112.4L1113.2 1108.5L1112.8 1103.2L1112.1 1096.9L1111.1 1090.1L1110 1083.3L1109.1 1076.7L1108.3 1071L1107.6 1065L1107 1059.5L1106.5 1054.2L1106.1 1049.1L1105.9 1044L1105.8 1038.7L1105.9 1033.5L1106.1 1028.3L1106.5 1023.2L1107 1017.9L1107.6 1012.3L1108.3 1006.3L1108.9 1001.4L1109.6 996.2L1110.3 990.7L1111.1 985.1L1111.9 979.5L1112.8 974L1113.7 968.8L1114.6 963.9L1116 957.6L1117.6 951.2L1119.2 945.1L1120.6 939.5L1121.6 934.8L1122.3 931.3Z" fill="#000"/>
<path d="M1092.6 1071.6L1091.7 1072.5L1091.5 1076L1091.3 1080.3L1091.1 1085.5L1091 1091.3L1091.2 1097.6L1091.3 1104.2L1091.4 1111L1091.6 1117.9L1091.7 1124.7L1091.9 1131.4L1092.1 1136.9L1092.3 1142.9L1092.5 1149L1092.7 1155.4L1092.9 1161.8L1093.2 1168.2L1093.4 1174.5L1093.6 1180.6L1093.8 1186.5L1094 1192L1094.2 1197L1094.4 1201.5L1094.7 1209.2L1095 1215.6L1095.5 1220.9L1096 1225.2L1096.4 1228.7L1096.8 1231.5L1097.6 1232.3L1098.4 1231.5L1098.5 1228.6L1098.7 1225.1L1098.7 1220.8L1098.7 1215.4L1098.5 1209L1098.2 1201.3L1098 1196.9L1097.8 1191.8L1097.6 1186.4L1097.4 1180.5L1097.2 1174.4L1096.9 1168.1L1096.7 1161.7L1096.5 1155.2L1096.3 1148.9L1096 1142.7L1095.9 1136.8L1095.7 1131.2L1095.5 1124.6L1095.3 1117.8L1095.2 1110.9L1095.1 1104.1L1094.9 1097.5L1094.8 1091.2L1094.6 1085.4L1094.2 1080.3L1093.8 1075.9L1093.5 1072.5Z" fill="#000"/>
<path d="M1214.4 988.3L1213.7 989.2L1213.9 992.5L1214.2 996.6L1214.7 1001.3L1215.3 1006.7L1216.2 1012.4L1217.1 1018.6L1218.1 1024.9L1219.1 1031.4L1220.2 1038L1221.3 1044.4L1222.4 1050.6L1223.4 1056.5L1224.6 1062.3L1225.7 1068L1226.9 1073.8L1228.2 1079.6L1229.5 1085.4L1230.8 1091.2L1232.1 1097L1233.4 1102.9L1234.7 1108.8L1236 1114.7L1237.2 1120.7L1238.4 1126.7L1239.6 1132.4L1240.7 1138.4L1241.9 1144.6L1243 1150.9L1244.2 1157.2L1245.3 1163.5L1246.4 1169.8L1247.5 1175.9L1248.6 1181.8L1249.6 1187.4L1250.5 1192.6L1251.4 1197.4L1252.2 1201.8L1253.8 1209.7L1255.2 1216.3L1256.5 1221.5L1257.7 1225.6L1258.7 1229L1259.5 1231.7L1260.5 1232.3L1261.1 1231.3L1260.8 1228.5L1260.3 1225.1L1259.6 1220.8L1258.8 1215.5L1257.5 1209L1256 1201L1255.1 1196.7L1254.3 1191.9L1253.3 1186.7L1252.3 1181.1L1251.3 1175.2L1250.2 1169.1L1249 1162.9L1247.9 1156.5L1246.7 1150.2L1245.6 1143.9L1244.4 1137.7L1243.3 1131.7L1242.2 1125.9L1240.9 1119.9L1239.7 1113.9L1238.4 1107.9L1237.1 1102L1235.8 1096.2L1234.5 1090.3L1233.2 1084.5L1231.9 1078.8L1230.6 1073L1229.4 1067.3L1228.3 1061.6L1227.2 1055.9L1226.1 1050L1225 1043.7L1223.9 1037.3L1222.9 1030.8L1221.8 1024.3L1220.8 1018L1219.9 1011.9L1219 1006.1L1218 1000.8L1217 996.2L1216.1 992.2L1215.3 989Z" fill="#000"/>
<path d="M1246.7 1144.3L1245.8 1145L1245.1 1148.5L1244 1153.4L1242.9 1159.1L1242 1165.2L1241.1 1171.1L1240.3 1175.9L1239.5 1180.8L1238.6 1185.9L1237.8 1191L1236.9 1196.1L1236.1 1201.1L1235.2 1206.5L1234.2 1212.3L1233.4 1218.1L1232.8 1223.5L1232.3 1228.1L1232 1231.4L1232.7 1232.3L1233.6 1231.6L1234.4 1228.4L1235.4 1223.9L1236.6 1218.6L1237.7 1212.8L1238.6 1207L1239.5 1201.7L1240.4 1196.6L1241.2 1191.5L1242.1 1186.5L1243 1181.4L1243.8 1176.5L1244.5 1171.7L1245.4 1165.7L1246.2 1159.6L1246.8 1153.7L1247.1 1148.8L1247.4 1145.2Z" fill="#000"/>
<path d="M1405.2 930.1L1404.6 931.3L1405.5 934.7L1406.8 939.1L1408.4 944.3L1410.4 950L1412.6 956.1L1414.7 962.3L1416.8 968.4L1418.7 974.2L1420.2 979.3L1421.7 984.5L1423.2 989.9L1424.7 995.3L1426.2 1000.7L1427.5 1006.1L1428.8 1011.4L1430 1016.6L1431.1 1021.5L1432.4 1027.6L1433.5 1033.3L1434.5 1038.9L1435.3 1044.3L1436.1 1049.8L1436.7 1055.5L1437.3 1061.4L1437.7 1067L1438 1073.3L1438.2 1079.8L1438.3 1086.3L1438.5 1092.5L1438.9 1098.1L1439.3 1102.8L1439.7 1106.3L1440.6 1107.2L1441.5 1106.3L1441.7 1102.8L1442.1 1098.1L1442.3 1092.4L1442.4 1086.2L1442.2 1079.7L1442 1073.1L1441.7 1066.8L1441.3 1061L1440.7 1055.1L1440.1 1049.3L1439.3 1043.8L1438.5 1038.2L1437.5 1032.6L1436.3 1026.8L1435.1 1020.7L1434 1015.7L1432.8 1010.5L1431.5 1005.1L1430.1 999.7L1428.6 994.3L1427.1 988.8L1425.6 983.4L1424.1 978.1L1422.5 973L1420.7 967.1L1418.6 960.9L1416.4 954.7L1414.2 948.6L1411.9 943L1409.7 938L1407.8 933.8L1406.4 930.7Z" fill="#000"/>
<path d="M1453 1106.7L1452.3 1107.6L1452.5 1110.7L1452.8 1114.8L1453.2 1119.6L1453.7 1125.1L1454.5 1131.1L1455.4 1137.4L1456.4 1144L1457.1 1149.1L1457.9 1154.6L1458.7 1160.6L1459.6 1166.9L1460.5 1173.2L1461.4 1179.6L1462.3 1185.7L1463.2 1191.6L1464 1196.9L1464.7 1201.7L1465.7 1208.6L1466.7 1214.9L1467.7 1220.3L1468.7 1224.9L1469.6 1228.7L1470.3 1231.6L1471.2 1232.3L1471.9 1231.4L1471.6 1228.4L1471.3 1224.5L1470.8 1219.8L1470.1 1214.3L1469.2 1208.1L1468.1 1201.1L1467.4 1196.4L1466.7 1191L1465.8 1185.2L1464.9 1179.1L1464 1172.7L1463.1 1166.4L1462.2 1160.1L1461.3 1154.1L1460.6 1148.6L1459.8 1143.6L1458.9 1136.9L1458 1130.6L1457.2 1124.6L1456.3 1119.2L1455.4 1114.4L1454.5 1110.5L1453.9 1107.4Z" fill="#000"/>
<path d="M826.1 719.7L824.7 718.9L821.6 719.5L817.4 720.3L812.2 721.3L806.3 722.5L799.6 723.8L794.8 724.6L789.5 725.4L783.7 726.1L777.6 726.9L771.3 727.7L765 728.5L758.8 729.3L752.8 730.1L746.9 730.9L741 731.8L735.1 732.7L729.3 733.5L723.4 734.4L717.6 735.2L711.8 735.8L706 736.4L700 736.7L693.7 736.9L687.3 736.9L680.8 736.9L674.6 736.9L668.8 737.1L663.5 737.3L658.9 737.9L652.4 739.8L648.2 742.4L645.3 745.2L642.3 747.8L638.4 750.5L634.3 753.5L630.2 756.8L626.3 760.5L622.9 764.6L619.7 769L616.7 773.5L613.6 778L610.3 782.5L606.9 787.1L603.3 791.8L599.7 796.6L596.6 800.6L593.4 804.7L590.1 808.8L586.9 812.9L583.9 817L580.3 822.1L576.9 827.2L573.8 832L571.4 835.8L568 840.5L567.1 845.4L569.4 849.8L572.8 853.7L576.3 857.5L579.8 861.7L583.7 866.3L587.4 870.2L592.4 874.4L597.8 877L604.2 877.6L610.4 876.1L615.2 872.6L618.8 868.1L621.3 863.3L622.9 859.6L622.4 858.1L620.9 858.6L618.8 861.8L615.6 865.7L612.2 869.1L608.4 871.7L603.8 872.7L599 872.4L595.1 870.4L590.8 866.6L587.3 863L583.5 858.6L579.9 854.3L576.4 850.4L573.3 846.9L571.9 844.6L572.3 842.7L575.4 838.6L577.9 834.6L580.9 829.9L584.4 824.8L587.9 819.8L590.8 815.9L593.9 811.8L597.2 807.7L600.4 803.6L603.5 799.6L607.2 794.7L610.7 790L614.2 785.4L617.6 780.8L620.8 776.3L623.7 771.8L626.7 767.6L629.9 763.9L633.4 760.5L637.2 757.4L641.2 754.5L645.3 751.6L648.6 748.7L651.1 746.2L654.2 744.3L659.9 742.7L664 742.2L669 741.9L674.7 741.8L680.8 741.8L687.3 741.8L693.8 741.8L700.2 741.6L706.4 741.2L712.3 740.7L718.2 740L724.1 739.2L730 738.4L735.9 737.5L741.7 736.6L747.6 735.7L753.4 734.9L759.4 734.1L765.6 733.3L772 732.5L778.2 731.8L784.3 731L790.2 730.2L795.6 729.4L800.4 728.6L807.3 727.2L813.3 725.6L818.3 723.8L822.3 722.2L825.3 721.1Z" fill="#000"/>
<path d="M612.9 792.4L611.5 793L609.9 796.1L607.6 800.5L605.1 805.7L602.8 811.1L600.9 816L598.5 821.9L595.9 827.9L593.8 833.6L592.9 839L594.7 844.1L598.3 847L601.4 849.7L604.3 853.6L607.6 858.1L610.6 862L613.8 866.4L617.2 870.1L621.9 874L627.4 877L633.2 877.5L638.6 876L642.9 872.6L646 867.8L647.4 862.1L647.5 855.9L646.8 851.2L645.7 846.5L644.9 843.2L643.6 842.3L642.7 843.6L642.9 846.9L643.1 851.6L643.1 855.9L642.7 861.4L641.6 866L639.4 869.5L636.4 871.8L632.8 872.8L628.8 872.4L624.6 870.1L620.4 866.7L617.5 863.4L614.4 859.2L611.4 855.2L608.1 850.8L604.8 846.5L601.3 843.4L598.6 841.4L597.7 838.6L598.4 834.9L600.3 829.6L602.9 823.7L605.3 817.8L607.2 812.8L609.3 807.3L611.1 801.9L612.5 797.2L613.5 793.8Z" fill="#000"/>
<path d="M615.8 792.6L614.8 793.2L613.7 796.4L612.1 800.9L610.4 806.2L609.2 811.7L608.4 816.8L608.4 822.7L609.1 828.7L610.2 833.8L610.9 837.3L611.8 838L612.5 837.1L612.4 833.5L612.1 828.4L611.9 822.6L612 817L612.7 812.4L613.8 807L614.9 801.6L615.8 796.9L616.4 793.6Z" fill="#000"/>
<path d="M641.7 792.4L640.4 793.1L638.8 796.8L636.5 802.1L634.2 807.9L632.3 812.8L629.4 817.8L626.3 822.5L625 828.1L627.4 833.5L631.7 837.9L635.9 842L640.1 845.7L644.5 849.1L648.3 852.7L652.1 857.3L655.8 862.3L658.5 865.8L659.9 866.2L660.3 864.8L658.3 860.7L655.4 855.1L651.7 849.7L647.5 845.6L643.1 842.2L639.1 838.6L634.9 834.7L631.2 830.8L629.6 827.5L630.5 824.5L633.4 820.2L636.5 814.8L638.4 809.4L640.2 803.3L641.5 797.7L642.4 793.7Z" fill="#000"/>
<path d="M656.8 868.5L657.9 869.4L661.4 869.4L666.3 868.5L671.8 865.6L676.8 861.3L679.8 856L681.2 849.9L681 845L680.1 839.8L678.8 834.9L676.8 830.1L674.2 825.7L671.8 822.1L668.6 818.4L666.4 816.2L664.9 816.1L664.8 817.6L666.5 820L668.8 824.1L670.6 827.7L672.7 832L674.4 836.3L675.6 840.8L676.4 845.5L676.6 849.5L675.5 854.4L673.2 858.3L669.2 862.2L664.9 865.3L660.9 866.8L657.7 867.4Z" fill="#000"/>
<path d="M710.2 773.2L708.7 773.1L706.1 775L702.3 777.5L698 780.8L693.4 784.5L689 788.7L685.1 792.7L680.6 797.4L676.1 802.3L672.1 807.3L668.8 811.5L666.5 814.6L666.5 816L667.9 816L670.8 813.4L674.8 809.7L679.3 805.3L683.9 800.5L688.3 795.8L692.2 791.9L696.5 787.9L700.7 783.9L704.6 780.2L707.8 777L710.1 774.7Z" fill="#000"/>
<path d="M668.4 835.9L668.3 836.8L668.9 838.9L669.6 840.3L669.1 841.3L668.3 842.9L668.3 843.9L669.3 843.9L671.1 842.9L672.6 840.3L671.3 837.5L669.3 836Z" fill="#000"/>
<path d="M675.2 849.1L674.4 849.5L673 851.4L672 853.8L671.5 855.7L671.3 857.2L671.6 858.1L672.5 857.8L673.6 856.8L674.8 855L675.6 852.3L675.6 849.9Z" fill="#000"/>
<path d="M739.7 767.8L740 769.3L743.4 772L748.4 775.7L754.1 779.6L759.7 783L765.2 786L770.8 789L776 791.7L780 794L784 796.3L784.3 797.2L783.2 799.6L780.5 803.5L777.7 807.7L775 811.7L772.2 815.8L769.7 820.7L767.8 826.4L766.3 832.4L764.8 838.2L763.5 843.7L762.1 849L760.3 853.3L758 856.8L755.3 859.6L752.1 861.6L747.8 862.8L742.7 863.4L738 862.9L734 861.4L730.1 858.9L726.8 855.9L724.3 852.4L722.3 848.5L721.2 844.6L720.9 840.8L721.4 837L722.5 833.6L724.6 830.7L727.8 827.6L730.3 823.8L730.2 818.6L728.2 814.4L725.2 811.1L722.7 809L721.1 809L721.1 810.6L723.1 813L725 816.2L726 819.4L725.9 822.4L724.1 824.4L720.9 827.5L718.1 831.4L716.7 835.9L716.1 840.6L716.4 845.4L717.8 850.2L720.1 854.9L723.2 859.1L727.1 862.7L731.8 865.7L737 867.7L742.7 868.2L748.7 867.6L754.1 866L758.4 863.4L761.8 859.8L764.7 855.5L766.7 850.5L768.2 844.9L769.6 839.4L771 833.6L772.4 827.7L774.1 822.5L776.4 818.3L779.1 814.4L781.7 810.5L784.6 806.2L787.5 801.9L789.1 797.4L787.4 792.8L782.4 789.8L778.3 787.4L773.1 784.7L767.5 781.7L762.1 778.8L756.6 775.5L750.6 772.2L745.1 769.4L741.2 767.5Z" fill="#000"/>
<path d="M705 794.8L704.5 796.3L706.2 800.4L709.3 805.7L712.2 808.9L715.8 811.8L720.9 814.4L725 815.9L729.7 817.3L734.8 818.5L739.9 819.7L744.8 820.8L750.5 821.9L756.2 822.9L762 823.8L768.5 824.7L773 825.3L777.6 825.9L782.5 826.5L787.7 827.1L793.5 827.5L799.9 827.9L804.9 828.1L810.7 828.3L817 828.4L823.5 828.5L830 828.5L836.1 828.4L841.6 828L846.2 827.6L849.7 827.3L850.8 826.2L849.7 825.1L846.3 824.7L841.7 824.3L836.1 823.8L830 823.6L823.6 823.6L817.1 823.5L810.8 823.4L805.1 823.3L800.1 823.1L793.8 822.7L788.2 822.2L783 821.7L778.3 821.1L773.7 820.5L769.1 819.9L762.7 819L757 818.1L751.4 817.2L745.8 816L740.9 815L735.9 813.8L731 812.6L726.5 811.3L722.9 810L718.4 807.7L715.2 805.4L712.5 803.1L708.8 798.8L706.5 795.3Z" fill="#000"/>
<path d="M848.7 826.4L849.8 827.3L853.2 827.4L857.5 827.4L862.6 827.3L868.4 827L874.6 826.5L881 826L887.6 825.4L894 824.9L900.2 824.3L905.9 823.8L912.2 823.2L918.8 822.6L925.6 821.9L932.3 821.3L938.7 820.7L944.7 819.9L950 819L954.5 818.2L957.9 817.5L958.8 816.4L957.7 815.5L954.2 815.5L949.6 815.5L944.3 815.7L938.3 816.1L931.8 816.7L925.1 817.3L918.4 818L911.8 818.6L905.5 819.2L899.8 819.7L893.6 820.3L887.2 820.8L880.6 821.4L874.2 821.9L868 822.5L862.3 823.1L857.2 823.9L852.9 824.7L849.6 825.3Z" fill="#000"/>
<path d="M651.5 871.5L650.7 872.5L650.9 875.8L651.2 880.3L651.6 885.8L652.2 891.9L652.5 896.4L652.9 901.4L653.3 906.7L653.6 912.2L653.9 917.7L654.3 923L654.5 928.3L654.8 933.7L655.1 939L655.3 944.3L655.5 949.5L655.7 954.3L656 959.7L656.2 964.9L656.4 969.9L656.6 974.6L656.9 979.2L657.3 983.8L657.8 987.6L658.3 992L658.9 998.8L659.1 1002.9L659.5 1007.6L659.8 1012.7L660.1 1018.3L660.5 1024L660.8 1029.9L661.2 1035.8L661.5 1041.6L661.8 1047.1L662 1052.4L662.3 1057.7L662.5 1062.8L662.8 1068L663 1073.3L663.2 1078.6L663.4 1084L663.5 1089.6L663.6 1095.3L663.7 1100.8L663.8 1106.5L663.8 1112.3L663.9 1118.3L663.9 1124.3L663.9 1130.4L663.9 1136.3L663.8 1142.2L663.8 1147.8L663.8 1153.2L663.9 1159.7L663.9 1166L663.9 1172.1L663.9 1178L663.9 1183.8L663.9 1189.4L663.8 1194.8L663.8 1200L663.8 1206.9L663.8 1213.8L663.9 1220.4L664.3 1226.4L664.7 1231.3L665 1235L665.9 1235.9L666.8 1235L667.1 1231.3L667.5 1226.4L667.9 1220.4L668 1213.8L668 1206.9L668 1200L668 1194.8L668 1189.4L668 1183.8L668 1178L668 1172.1L668 1166L668 1159.7L668 1153.2L667.9 1147.8L668 1142.2L668 1136.3L668 1130.4L668 1124.3L668 1118.3L667.9 1112.3L667.9 1106.4L667.8 1100.7L667.8 1095.3L667.6 1089.5L667.5 1083.9L667.3 1078.4L667.1 1073.1L666.9 1067.9L666.6 1062.7L666.4 1057.5L666.1 1052.2L665.8 1046.9L665.6 1041.4L665.3 1035.6L664.9 1029.7L664.6 1023.8L664.2 1018L663.9 1012.5L663.6 1007.3L663.2 1002.6L662.9 998.4L662.4 991.6L661.8 987.1L661.4 983.4L660.9 978.8L660.7 974.4L660.5 969.7L660.3 964.8L660.1 959.6L659.9 954.1L659.6 949.3L659.4 944.2L659.2 938.9L658.9 933.5L658.6 928.1L658.3 922.8L658 917.4L657.7 911.9L657.4 906.4L657 901.1L656.6 896L656.2 891.5L655.4 885.4L654.3 879.9L653.3 875.4L652.5 872.3Z" fill="#000"/>
<path d="M650.9 913L650.5 913.6L651 916.9L651.6 921.6L652.4 927.2L653.1 933.4L653.6 938.3L654.1 944.1L654.7 950.3L655.3 956.1L655.9 961.1L656.3 964.6L656.8 965.1L657.3 964.6L657.2 961L657 956L656.7 950.1L656.3 944L655.8 938.1L655.3 933.2L654.4 926.9L653.3 921.3L652.2 916.7L651.5 913.4Z" fill="#000"/>
<path d="M735.6 868.9L734.5 869.6L733.5 873.6L732.1 879.2L730.8 885.5L729.9 891.5L729.3 896.8L728.8 902L728.5 907.2L728.2 912.4L728 917.6L727.9 922.9L727.9 928.1L727.9 933.4L728.2 938.5L728.5 943.6L729 948.8L729.3 954.3L729.6 959.1L729.9 964.2L730.2 969.4L730.5 974.4L730.8 979.1L731.2 983.8L731.6 987.5L732 991.9L732.3 998.7L732.5 1002.8L732.6 1007.5L732.7 1012.6L732.8 1018.2L732.9 1024L733 1029.8L733.1 1035.7L733.2 1041.5L733.3 1047L733.4 1052.4L733.5 1057.6L733.6 1062.8L733.7 1068L733.8 1073.2L733.9 1078.5L734 1084L734.1 1089.5L734.2 1095.3L734.3 1100.8L734.5 1106.5L734.6 1112.4L734.7 1118.3L734.8 1124.4L734.9 1130.4L735 1136.4L735.1 1142.2L735.2 1147.8L735.2 1153.2L735.3 1159.7L735.3 1166L735.3 1172.1L735.3 1178L735.3 1183.8L735.3 1189.4L735.2 1194.8L735.2 1200L735.2 1206.9L735.2 1213.8L735.3 1220.4L735.6 1226.4L736 1231.3L736.3 1235L737.2 1235.9L738.1 1235L738.4 1231.3L738.8 1226.4L739.1 1220.4L739.2 1213.8L739.2 1206.9L739.2 1200L739.2 1194.8L739.2 1189.4L739.2 1183.8L739.2 1178L739.2 1172.1L739.2 1166L739.2 1159.7L739.2 1153.2L739.1 1147.8L739 1142.1L738.9 1136.3L738.8 1130.3L738.7 1124.3L738.6 1118.3L738.5 1112.3L738.4 1106.4L738.3 1100.7L738.2 1095.3L738.1 1089.5L738 1083.9L737.9 1078.5L737.8 1073.1L737.7 1067.9L737.6 1062.7L737.5 1057.5L737.4 1052.3L737.3 1047L737.2 1041.4L737.1 1035.7L736.9 1029.8L736.8 1023.9L736.7 1018.1L736.6 1012.6L736.5 1007.4L736.4 1002.7L736.3 998.5L735.9 991.7L735.5 987.1L735.1 983.4L734.8 978.9L734.5 974.2L734.1 969.2L733.8 964L733.5 958.9L733.3 954.1L732.9 948.6L732.4 943.4L732.1 938.3L731.9 933.2L731.8 928.1L731.8 922.9L732 917.8L732.2 912.6L732.4 907.4L732.7 902.3L733.2 897.2L733.7 891.9L734.5 886.1L735.3 879.7L735.9 874L736.3 870Z" fill="#000"/>
<path d="M721.8 867.9L721 868.9L721.2 872.9L721.5 878.5L721.9 885.1L722.6 891.9L722.9 896.6L723.3 901.6L723.7 906.9L724 912.3L724.4 917.7L724.6 923L724.9 928.2L725.1 933.4L725.2 938.7L725.4 943.9L725.5 949.1L725.6 954.3L725.8 960.8L726 967.7L726.5 974.3L727 980L727.4 984L728.3 984.9L729.2 984L729.4 979.9L729.7 974.3L729.8 967.6L729.7 960.7L729.6 954.1L729.4 949L729.3 943.8L729.1 938.6L729 933.3L728.8 928L728.6 922.8L728.3 917.5L728 912.1L727.6 906.6L727.2 901.3L726.8 896.3L726.4 891.5L725.7 884.7L724.7 878.1L723.6 872.6L722.8 868.7Z" fill="#000"/>
<path d="M653.4 891.2L653.7 892.5L657 894.9L661.7 898.1L667 900.9L672.2 902.5L677.7 903.6L683.3 904.1L688.8 903.8L694.3 903L699.4 902L704.3 901L709 899.7L713 898.4L717.2 896.5L719.7 895.2L720.2 893.9L718.9 893.4L716.3 894.3L712 895.4L708.1 896.2L703.5 897L698.6 898L693.6 898.9L688.4 899.7L683.3 899.9L678.3 899.5L673.2 898.5L668.4 897.1L663.3 895.1L658.3 892.6L654.7 890.9Z" fill="#000"/>
<path d="M657 945.3L657.3 946.6L661.2 949.4L667 952.7L671.8 954.4L677.2 955.7L683.2 956.3L688.3 956.1L693.7 955.4L699.1 954.6L704.6 953.6L710.5 952.6L716.7 951L722.3 949.5L726.2 948.3L726.9 947.2L725.8 946.5L721.8 946.9L716.1 947.6L709.7 948.6L703.8 949.6L698.5 950.4L693.1 951.3L688 951.9L683.4 952.1L677.8 951.6L672.8 950.5L668.4 949.3L662.4 947L658.3 945Z" fill="#000"/>
<path d="M656.3 1016.4L656.4 1017.7L658.7 1019.8L662.2 1022.9L666.9 1025.5L671.1 1027.1L676 1028.3L681.3 1029.3L686.9 1029.7L691.8 1029.6L697 1029.1L702.4 1028.4L707.5 1027.6L712.4 1026.7L718.3 1025.5L724.2 1023.7L729.2 1022L732.6 1020.8L733.3 1019.7L732.2 1019L728.5 1019.6L723.4 1020.5L717.5 1021.6L711.6 1022.7L706.9 1023.5L701.8 1024.3L696.6 1024.9L691.6 1025.4L687.1 1025.5L681.8 1025.1L676.8 1024.3L672.3 1023.1L668.3 1022.1L663.8 1020.2L660.1 1017.9L657.6 1016.3Z" fill="#000"/>
<path d="M659.2 1098.4L659.3 1099.7L661.9 1102.2L665.9 1105.7L670.7 1108.7L676.2 1110.5L682.2 1111.6L688.9 1111.9L694.5 1111.5L700.5 1110.6L706.6 1109.3L712.5 1107.9L718.8 1106L725.2 1103.5L730.8 1100.9L734.6 1099.1L735.2 1097.9L734 1097.3L729.9 1098.4L724 1100.1L717.5 1102.1L711.5 1103.9L705.7 1105.3L699.8 1106.5L694.1 1107.3L688.9 1107.7L682.7 1107.5L677.1 1106.5L672.3 1105.1L667.7 1103L663.5 1100.2L660.5 1098.3Z" fill="#000"/>
<path d="M665.9 1184.6L666.3 1185.8L670.6 1188.6L676.7 1191.7L680.9 1193.1L685.5 1194L690.9 1194L695.9 1193.3L701.3 1192.1L706.9 1190.6L712.6 1189L717.5 1187.5L722.9 1185.6L728.1 1183.5L732.5 1181.6L735.6 1180.2L736.2 1179L735 1178.4L731.7 1179.2L727 1180.4L721.7 1181.9L716.3 1183.5L711.4 1185L705.8 1186.6L700.3 1188L695.1 1189.2L690.7 1189.8L685.8 1189.8L681.7 1189.1L677.9 1188.3L671.7 1186.1L667.1 1184.2Z" fill="#000"/>
<path d="M3.5 1197V124.3H1917" fill="none" stroke="#000" stroke-opacity="0.3" stroke-width="1" stroke-linecap="butt"/>
<rect x="12.8" y="128.6" width="1894.3" height="1062.4" fill="none" stroke="#000" stroke-opacity="0.42" stroke-width="2"/>
</g>
</g>
</svg>
</body>
</html>
